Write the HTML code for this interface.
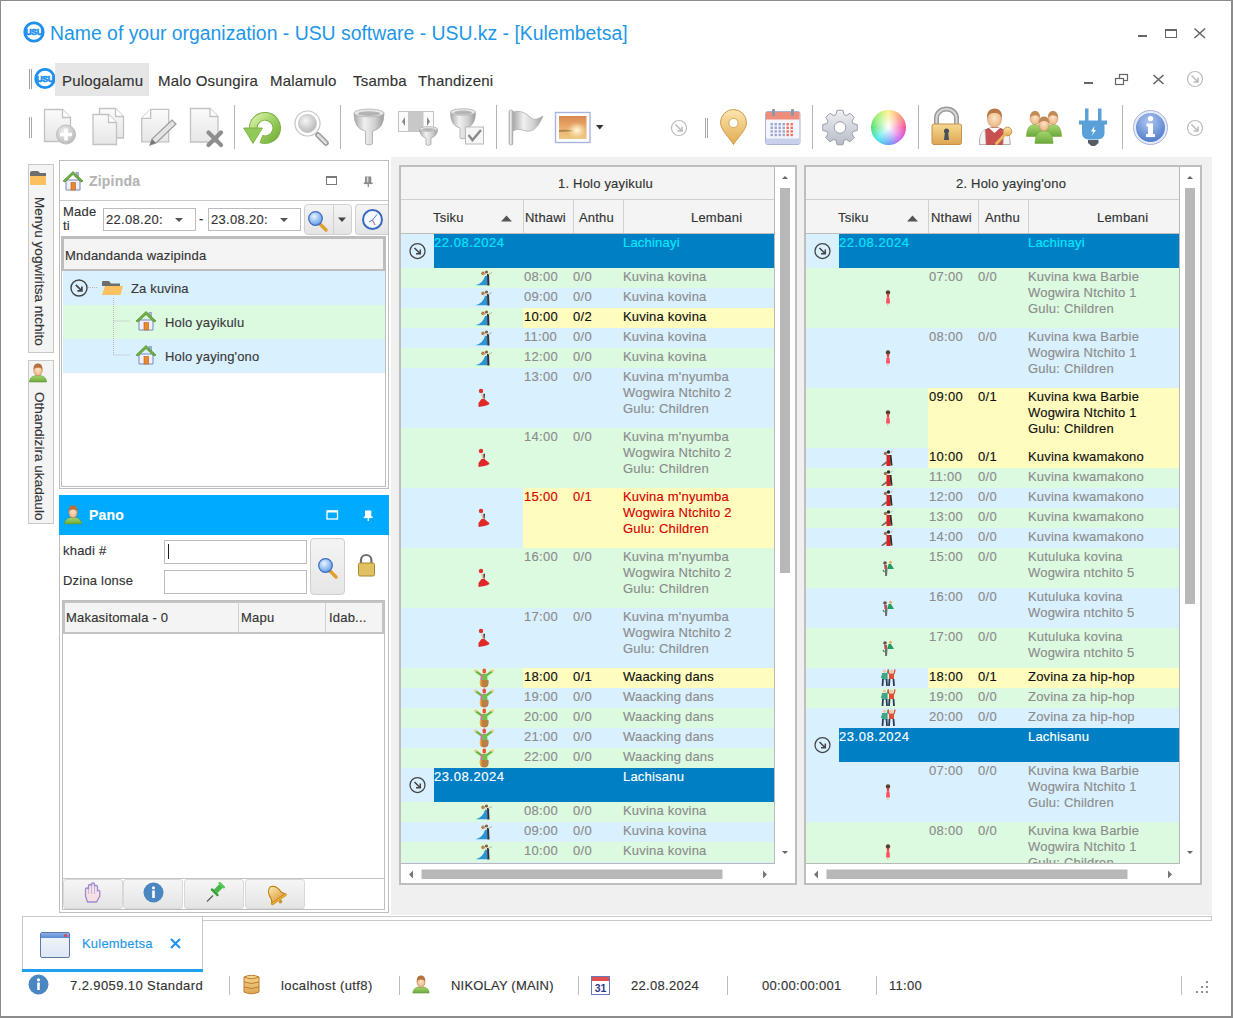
<!DOCTYPE html><html><head><meta charset="utf-8"><style>
*{margin:0;padding:0;box-sizing:border-box}
html,body{width:1233px;height:1018px;overflow:hidden;background:#fff;font-family:"Liberation Sans",sans-serif;color:#333}
.ab{position:absolute}
.t{position:absolute;white-space:nowrap;line-height:1;letter-spacing:0.2px;-webkit-text-stroke:0.15px currentColor}
svg{position:absolute;overflow:visible}
</style></head><body>
<div class="ab" style="left:0;top:0;width:1233px;height:1018px;border:1px solid #8c8c8c;border-right:2px solid #8c8c8c;border-bottom:2px solid #8c8c8c"></div>
<svg style="left:0;top:0;position:absolute" width="0" height="0">
<defs>
<linearGradient id="gPage" x1="0" y1="0" x2="0" y2="1"><stop offset="0" stop-color="#fbfbfb"/><stop offset="1" stop-color="#e6e6e6"/></linearGradient>
<radialGradient id="gPlus" cx="0.4" cy="0.35" r="0.7"><stop offset="0" stop-color="#eeeeee"/><stop offset="1" stop-color="#b8b8b8"/></radialGradient>
<linearGradient id="gGreen" x1="0" y1="0" x2="1" y2="1"><stop offset="0" stop-color="#d8f0a8"/><stop offset="0.5" stop-color="#9cd060"/><stop offset="1" stop-color="#78b040"/></linearGradient>
<radialGradient id="gLens" cx="0.4" cy="0.35" r="0.7"><stop offset="0" stop-color="#f6f6f6"/><stop offset="1" stop-color="#b4b4b4"/></radialGradient>
<linearGradient id="gSilver" x1="0" y1="0" x2="1" y2="0"><stop offset="0" stop-color="#a8a8a8"/><stop offset="0.35" stop-color="#f0f0f0"/><stop offset="0.7" stop-color="#d0d0d0"/><stop offset="1" stop-color="#9a9a9a"/></linearGradient>
<linearGradient id="gGold" x1="0" y1="0" x2="0" y2="1"><stop offset="0" stop-color="#fae6b0"/><stop offset="1" stop-color="#e2aa50"/></linearGradient>
<linearGradient id="gGold2" x1="0" y1="0" x2="0" y2="1"><stop offset="0" stop-color="#f6d890"/><stop offset="1" stop-color="#dca654"/></linearGradient>
<linearGradient id="gPhoto" x1="0" y1="0" x2="0" y2="1"><stop offset="0" stop-color="#d98850"/><stop offset="0.55" stop-color="#eab070"/><stop offset="1" stop-color="#f0c880"/></linearGradient>
<radialGradient id="gSun" cx="0.65" cy="0.62" r="0.35"><stop offset="0" stop-color="#fffbe0"/><stop offset="1" stop-color="#fff0c0" stop-opacity="0"/></radialGradient>
<linearGradient id="gGear" x1="0" y1="0" x2="0" y2="1"><stop offset="0" stop-color="#eef0f4"/><stop offset="1" stop-color="#b8bcc8"/></linearGradient>
<radialGradient id="gInfo" cx="0.45" cy="0.3" r="0.75"><stop offset="0" stop-color="#b0c8f0"/><stop offset="1" stop-color="#4a78c8"/></radialGradient>
<radialGradient id="gWhite" cx="0.5" cy="0.5" r="0.5"><stop offset="0" stop-color="#fff"/><stop offset="0.7" stop-color="#fff" stop-opacity="0"/></radialGradient>
<linearGradient id="gBtn" x1="0" y1="0" x2="0" y2="1"><stop offset="0" stop-color="#f8f8f8"/><stop offset="1" stop-color="#e2e2e2"/></linearGradient>
<radialGradient id="gBlueLens" cx="0.4" cy="0.35" r="0.7"><stop offset="0" stop-color="#e8f4ff"/><stop offset="1" stop-color="#5a9ae6"/></radialGradient>
<linearGradient id="gUserBody" x1="0" y1="0" x2="0" y2="1"><stop offset="0" stop-color="#a8d870"/><stop offset="1" stop-color="#6aa83a"/></linearGradient>
<radialGradient id="gFace" cx="0.5" cy="0.45" r="0.6"><stop offset="0" stop-color="#fde4c4"/><stop offset="1" stop-color="#e8b080"/></radialGradient>
</defs>
</svg>
<svg style="left:0;top:0" width="1" height="1"><circle cx="34" cy="32" r="9.2" fill="none" stroke="#1e90ee" stroke-width="2.8000000000000003"/><text x="34" y="35" font-family="Liberation Sans" font-weight="bold" font-size="8.6" fill="#1e90ee" stroke="#1e90ee" stroke-width="0.6" text-anchor="middle" letter-spacing="-0.4" transform="translate(34 32) scale(1 1.15) translate(-34 -32)">USU</text></svg>
<div class="t" style="left:50px;top:24px;font-size:19.4px;color:#1e97e6;font-weight:normal;-webkit-text-stroke:0;letter-spacing:0">Name of your organization - USU software - USU.kz - [Kulembetsa]</div>
<div class="ab" style="left:1138px;top:35px;width:9px;height:2px;background:#666"></div>
<div class="ab" style="left:1165px;top:29px;width:12px;height:9px;border:1px solid #666;border-top:2px solid #666"></div>
<svg style="left:0;top:0" width="1" height="1"><path d="M1194.5 28.5 L1205 38 M1205 28.5 L1194.5 38" stroke="#666" stroke-width="1.6"/></svg>
<div class="ab" style="left:29px;top:69px;width:1px;height:20px;background:#a0a0a0"></div>
<div class="ab" style="left:31px;top:69px;width:1px;height:20px;background:#a0a0a0"></div>
<svg style="left:0;top:0" width="1" height="1"><circle cx="45" cy="78.5" r="9.2" fill="none" stroke="#1e90ee" stroke-width="2.8000000000000003"/><text x="45" y="81.5" font-family="Liberation Sans" font-weight="bold" font-size="8.6" fill="#1e90ee" stroke="#1e90ee" stroke-width="0.6" text-anchor="middle" letter-spacing="-0.4" transform="translate(45 78.5) scale(1 1.15) translate(-45 -78.5)">USU</text></svg>
<div class="ab" style="left:55px;top:63px;width:94px;height:33px;background:#e6e6e6"></div>
<div class="t" style="left:62px;top:73px;font-size:15px;color:#333;font-weight:normal;">Pulogalamu</div>
<div class="t" style="left:158px;top:73px;font-size:15px;color:#333;font-weight:normal;">Malo Osungira</div>
<div class="t" style="left:270px;top:73px;font-size:15px;color:#333;font-weight:normal;">Malamulo</div>
<div class="t" style="left:353px;top:73px;font-size:15px;color:#333;font-weight:normal;">Tsamba</div>
<div class="t" style="left:418px;top:73px;font-size:15px;color:#333;font-weight:normal;">Thandizeni</div>
<div class="ab" style="left:1084px;top:82px;width:9px;height:2px;background:#666"></div>
<svg style="left:0;top:0" width="1" height="1"><rect x="1119.5" y="74.5" width="8" height="6" fill="none" stroke="#666" stroke-width="1.2"/><rect x="1115.5" y="78.5" width="8" height="6" fill="#fff" stroke="#666" stroke-width="1.2"/><path d="M1153.5 75 L1163.5 84 M1163.5 75 L1153.5 84" stroke="#666" stroke-width="1.6"/></svg>
<svg style="left:0;top:0" width="1" height="1"><circle cx="1195" cy="79" r="7.5" fill="none" stroke="#bbb" stroke-width="1.2"/><path d="M1191.5 75.5 L1198 82 M1198 77.5 L1198 82 L1193.5 82" fill="none" stroke="#bbb" stroke-width="1.5"/></svg>
<div class="ab" style="left:29px;top:117px;width:1px;height:21px;background:#a8a8a8"></div>
<div class="ab" style="left:31px;top:117px;width:1px;height:21px;background:#a8a8a8"></div>
<div class="ab" style="left:234px;top:105px;width:1px;height:44px;background:#b4b4b4"></div>
<div class="ab" style="left:340px;top:105px;width:1px;height:44px;background:#b4b4b4"></div>
<div class="ab" style="left:496px;top:105px;width:1px;height:44px;background:#b4b4b4"></div>
<div class="ab" style="left:812px;top:105px;width:1px;height:44px;background:#b4b4b4"></div>
<div class="ab" style="left:918px;top:105px;width:1px;height:44px;background:#b4b4b4"></div>
<div class="ab" style="left:1122px;top:105px;width:1px;height:44px;background:#b4b4b4"></div>
<div class="ab" style="left:705px;top:118px;width:1px;height:20px;background:#a8a8a8"></div>
<div class="ab" style="left:707px;top:118px;width:1px;height:20px;background:#a8a8a8"></div>
<svg style="left:0;top:0" width="1" height="1"><circle cx="679" cy="128" r="7.5" fill="none" stroke="#bbb" stroke-width="1.2"/><path d="M675.5 124.5 L682 131 M682 126.5 L682 131 L677.5 131" fill="none" stroke="#bbb" stroke-width="1.5"/></svg>
<svg style="left:0;top:0" width="1" height="1"><circle cx="1195" cy="128" r="7.5" fill="none" stroke="#bbb" stroke-width="1.2"/><path d="M1191.5 124.5 L1198 131 M1198 126.5 L1198 131 L1193.5 131" fill="none" stroke="#bbb" stroke-width="1.5"/></svg>
<div class="ab" style="left:871px;top:110px;width:35px;height:35px;border-radius:50%;background:conic-gradient(from 0deg,#fff08a,#ff9a7a,#f04a9a,#d060f0,#60a0f8,#40e8e8,#50e070,#a0f070,#fff08a)"></div>
<div class="ab" style="left:871px;top:110px;width:35px;height:35px;border-radius:50%;background:radial-gradient(circle,#fff 0%,rgba(255,255,255,0) 70%)"></div>
<svg style="left:0;top:0" width="1" height="1"><path d="M44.5 109.5 L62.5 109.5 L70.5 117.5 L70.5 141.5 L44.5 141.5 Z" fill="url(#gPage)" stroke="#c2c2c2" stroke-width="1.3"/><path d="M62.5 109.5 L62.5 117.5 L70.5 117.5" fill="#fff" stroke="#c2c2c2" stroke-width="1.3"/><circle cx="66" cy="134.5" r="9.5" fill="url(#gPlus)" stroke="#bdbdbd" stroke-width="1"/><path d="M66 128.5 V140.5 M60 134.5 H72" stroke="#fff" stroke-width="3.6"/><path d="M99.5 108.5 L115.5 108.5 L123.5 116.5 L123.5 138.0 L99.5 138.0 Z" fill="url(#gPage)" stroke="#c2c2c2" stroke-width="1.3"/><path d="M115.5 108.5 L115.5 116.5 L123.5 116.5" fill="#fff" stroke="#c2c2c2" stroke-width="1.3"/><path d="M93 114.5 L108.5 114.5 L116.5 122.5 L116.5 144.5 L93 144.5 Z" fill="url(#gPage)" stroke="#c2c2c2" stroke-width="1.3"/><path d="M108.5 114.5 L108.5 122.5 L116.5 122.5" fill="#fff" stroke="#c2c2c2" stroke-width="1.3"/><path d="M150.7 109.3 L168.7 109.3 L168.7 141.8 L141.7 141.8 L141.7 118.3 Z" fill="url(#gPage)" stroke="#c2c2c2" stroke-width="1.3"/><path d="M150.7 109.3 L150.7 118.3 L141.7 118.3" fill="#fff" stroke="#c2c2c2" stroke-width="1.3"/><path d="M150 145 L152 139 L172 120 L176 124 L156 143 Z" fill="#e4e4e4" stroke="#9a9a9a" stroke-width="1.2"/><path d="M150 145 L152 139 L156 143 Z" fill="#777"/><path d="M190.5 108.5 L210.0 108.5 L218.0 116.5 L218.0 142.0 L190.5 142.0 Z" fill="url(#gPage)" stroke="#c2c2c2" stroke-width="1.3"/><path d="M210.0 108.5 L210.0 116.5 L218.0 116.5" fill="#fff" stroke="#c2c2c2" stroke-width="1.3"/><path d="M208.5 132.5 L221 145 M221 132.5 L208.5 145" stroke="#8e8e8e" stroke-width="4.2" stroke-linecap="round"/><path d="M253.3 128 A11.7 11.7 0 1 1 261 139" fill="none" stroke="#78b040" stroke-width="8.6"/><path d="M253.3 128 A11.7 11.7 0 1 1 261 139" fill="none" stroke="url(#gGreen)" stroke-width="6.8"/><path d="M243.7 128 L262.4 128 L253 143.4 Z" fill="#92ca5a" stroke="#78b040" stroke-width="0.9"/><path d="M318 135 L326 143" stroke="#9a9a9a" stroke-width="5.5" stroke-linecap="round"/><path d="M318 135 L326 143" stroke="#e0e0e0" stroke-width="2.5" stroke-linecap="round"/><circle cx="307.5" cy="123.5" r="12.5" fill="#fff" stroke="#c4c4c4" stroke-width="1.2"/><circle cx="307.5" cy="123.5" r="9" fill="url(#gLens)" stroke="#c8c8c8" stroke-width="1"/><path d="M354.0 113 Q354.0 129 365.5 131 L365.5 144 Q369 146 372.5 144 L372.5 131 Q384.0 129 384.0 113 Z" fill="url(#gSilver)" stroke="#a8a8a8" stroke-width="0.8"/><ellipse cx="369" cy="113" rx="15.0" ry="3.9000000000000004" fill="#e8e8e8" stroke="#b0b0b0" stroke-width="0.8"/><ellipse cx="369" cy="113.6" rx="11.25" ry="2.4" fill="#b4b4b4"/><rect x="398.5" y="111.5" width="35" height="20" fill="#fafafa" stroke="#c4c4c4" stroke-width="1"/><rect x="408" y="112" width="15.5" height="19" fill="#c8c8c8"/><path d="M405 117 L402 121.5 L405 126 Z M427 117 L430 121.5 L427 126 Z" fill="#888"/><path d="M419.5 129 Q419.5 136 426.0 138 L426.0 144.5 Q428.5 146.5 431.0 144.5 L431.0 138 Q437.5 136 437.5 129 Z" fill="url(#gSilver)" stroke="#a8a8a8" stroke-width="0.8"/><ellipse cx="428.5" cy="129" rx="9.0" ry="2.34" fill="#e8e8e8" stroke="#b0b0b0" stroke-width="0.8"/><ellipse cx="428.5" cy="129.6" rx="6.75" ry="1.44" fill="#b4b4b4"/><path d="M450.5 112 Q450.5 126 460.0 128 L460.0 138 Q463 140 466.0 138 L466.0 128 Q475.5 126 475.5 112 Z" fill="url(#gSilver)" stroke="#a8a8a8" stroke-width="0.8"/><ellipse cx="463" cy="112" rx="12.5" ry="3.25" fill="#e8e8e8" stroke="#b0b0b0" stroke-width="0.8"/><ellipse cx="463" cy="112.6" rx="9.375" ry="2.0" fill="#b4b4b4"/><rect x="465.5" y="127" width="18" height="17" fill="#f6f6f6" stroke="#bcbcbc" stroke-width="1"/><path d="M468.5 135 L472.5 140 L481 130" fill="none" stroke="#8a8a8a" stroke-width="2.4"/><rect x="509" y="110" width="3.8" height="35" rx="1.5" fill="url(#gSilver)" stroke="#a0a0a0" stroke-width="0.6"/><path d="M513 112 C520 110 526 113 530 117 C534 121 538 119 543 116 C540 123 536 130 530 131 C524 132 520 127 513 131 Z" fill="url(#gSilver)" stroke="#b0b0b0" stroke-width="0.8"/><rect x="555.5" y="112.5" width="34.5" height="30" fill="#fff" stroke="#a8b4dc" stroke-width="1.4"/><rect x="559" y="116" width="27.5" height="23" fill="url(#gPhoto)"/><rect x="559" y="116" width="27.5" height="23" fill="url(#gSun)"/><path d="M559 130 Q566 129 574 131 L559 132 Z" fill="#8a6040" opacity="0.6"/><path d="M596 125 L603.5 125 L599.75 129.5 Z" fill="#333"/><path d="M733.5 144.5 C729 137 720.5 130 720.5 122.5 A13 13 0 0 1 746.5 122.5 C746.5 130 738 137 733.5 144.5 Z" fill="url(#gGold)" stroke="#cf9d48" stroke-width="1"/><circle cx="733.5" cy="123" r="4.6" fill="#fff" stroke="#d8a850" stroke-width="1"/><rect x="765.5" y="111.5" width="34.5" height="33" rx="2" fill="#f4f6fc" stroke="#a8b4d8" stroke-width="1"/><rect x="766" y="112" width="33.5" height="7.5" fill="#f08c7c"/><rect x="766" y="138.5" width="33.5" height="5.5" fill="#c8d0ec"/><rect x="772" y="109" width="3" height="7" rx="1" fill="#8a98a8"/><rect x="791" y="109" width="3" height="7" rx="1" fill="#8a98a8"/><rect x="770.5" y="123.0" width="2.4" height="2.4" fill="#9aa6d0"/><rect x="774.5" y="123.0" width="2.4" height="2.4" fill="#9aa6d0"/><rect x="778.5" y="123.0" width="2.4" height="2.4" fill="#9aa6d0"/><rect x="782.5" y="123.0" width="2.4" height="2.4" fill="#9aa6d0"/><rect x="786.5" y="123.0" width="2.4" height="2.4" fill="#f07060"/><rect x="790.5" y="123.0" width="2.4" height="2.4" fill="#f07060"/><rect x="770.5" y="126.6" width="2.4" height="2.4" fill="#9aa6d0"/><rect x="774.5" y="126.6" width="2.4" height="2.4" fill="#9aa6d0"/><rect x="778.5" y="126.6" width="2.4" height="2.4" fill="#9aa6d0"/><rect x="782.5" y="126.6" width="2.4" height="2.4" fill="#9aa6d0"/><rect x="786.5" y="126.6" width="2.4" height="2.4" fill="#f07060"/><rect x="790.5" y="126.6" width="2.4" height="2.4" fill="#f07060"/><rect x="770.5" y="130.2" width="2.4" height="2.4" fill="#9aa6d0"/><rect x="774.5" y="130.2" width="2.4" height="2.4" fill="#9aa6d0"/><rect x="778.5" y="130.2" width="2.4" height="2.4" fill="#9aa6d0"/><rect x="782.5" y="130.2" width="2.4" height="2.4" fill="#9aa6d0"/><rect x="786.5" y="130.2" width="2.4" height="2.4" fill="#f07060"/><rect x="790.5" y="130.2" width="2.4" height="2.4" fill="#f07060"/><rect x="770.5" y="133.8" width="2.4" height="2.4" fill="#9aa6d0"/><rect x="774.5" y="133.8" width="2.4" height="2.4" fill="#9aa6d0"/><rect x="778.5" y="133.8" width="2.4" height="2.4" fill="#9aa6d0"/><rect x="782.5" y="133.8" width="2.4" height="2.4" fill="#9aa6d0"/><rect x="786.5" y="133.8" width="2.4" height="2.4" fill="#f07060"/><rect x="790.5" y="133.8" width="2.4" height="2.4" fill="#f07060"/><path d="M852.90 123.51 L857.25 124.54 L857.25 130.46 L852.90 131.49 L851.94 133.80 L854.29 137.60 L850.10 141.79 L846.30 139.44 L843.99 140.40 L842.96 144.75 L837.04 144.75 L836.01 140.40 L833.70 139.44 L829.90 141.79 L825.71 137.60 L828.06 133.80 L827.10 131.49 L822.75 130.46 L822.75 124.54 L827.10 123.51 L828.06 121.20 L825.71 117.40 L829.90 113.21 L833.70 115.56 L836.01 114.60 L837.04 110.25 L842.96 110.25 L843.99 114.60 L846.30 115.56 L850.10 113.21 L854.29 117.40 L851.94 121.20 Z M845.8 127.5 A5.8 5.8 0 1 0 834.2 127.5 A5.8 5.8 0 1 0 845.8 127.5 Z" fill="url(#gGear)" fill-rule="evenodd" stroke="#9aa0aa" stroke-width="1"/><path d="M936.5 124 V118 A10 9 0 0 1 956.5 118 V124" fill="none" stroke="#9a9a9a" stroke-width="5"/><path d="M936.5 124 V118 A10 9 0 0 1 956.5 118 V124" fill="none" stroke="#d8d8d8" stroke-width="2"/><rect x="932" y="124" width="29.5" height="20.5" rx="2" fill="url(#gGold2)" stroke="#c89048" stroke-width="1"/><path d="M946.5 128.5 a2.6 2.6 0 0 1 2.6 2.6 c0 1 -0.5 1.6 -0.9 2 L949 140 H944 L944.8 133.1 c-0.4 -0.4 -0.9 -1 -0.9 -2 a2.6 2.6 0 0 1 2.6 -2.6 Z" fill="#4a5058"/><path d="M979.5 144.5 C979.5 133 984 128 994.5 127.5 C1005 128 1010 133 1010 144.5 Z" fill="#c85050" stroke="#a04040" stroke-width="0.8"/><path d="M979.5 144.5 C979.5 136 981 131 985 129.5 L986 144.5 Z M1010 144.5 C1010 136 1008.5 131 1004 129.5 L1003 144.5 Z" fill="#f4f4f4" stroke="#b0b0b0" stroke-width="0.6"/><path d="M989 128 L994.5 133 L1000 128 Z" fill="#fff"/><ellipse cx="994.5" cy="119" rx="7" ry="8.5" fill="url(#gFace)" stroke="#c89060" stroke-width="0.6"/><path d="M987.2 119 C986 112 990 108.5 994.5 108.5 C999.5 108.5 1003 112 1001.8 119 C1001 114 998 113 994.5 113 C991 113 988 114 987.2 119 Z" fill="#b87848"/><circle cx="1007.5" cy="131.5" r="4.3" fill="url(#gGold)" stroke="#c89048" stroke-width="1"/><path d="M1005 134.5 L996.5 143.5" stroke="#e8b860" stroke-width="3" stroke-linecap="round"/><path d="M1026.5 136.5 C1026.5 128.0 1029.9 124.6 1035 124.6 C1040.1 124.6 1043.5 128.0 1043.5 136.5 Z" fill="url(#gUserBody)" stroke="#7aa848" stroke-width="0.6"/><ellipse cx="1035" cy="118.225" rx="4.93" ry="6.375" fill="url(#gFace)" stroke="#c89060" stroke-width="0.6"/><path d="M1030.07 117.8 C1029.9 111.85 1033.3 111 1035 111 C1036.7 111 1040.1 111.85 1039.93 117.8 C1038.4 114.4 1031.6 114.4 1030.07 117.8 Z" fill="#c08a58"/><path d="M1044.5 136.5 C1044.5 128.0 1047.9 124.6 1053 124.6 C1058.1 124.6 1061.5 128.0 1061.5 136.5 Z" fill="url(#gUserBody)" stroke="#7aa848" stroke-width="0.6"/><ellipse cx="1053" cy="118.225" rx="4.93" ry="6.375" fill="url(#gFace)" stroke="#c89060" stroke-width="0.6"/><path d="M1048.07 117.8 C1047.9 111.85 1051.3 111 1053 111 C1054.7 111 1058.1 111.85 1057.93 117.8 C1056.4 114.4 1049.6 114.4 1048.07 117.8 Z" fill="#c08a58"/><path d="M1035.0 143.5 C1035.0 134.5 1038.6 130.9 1044 130.9 C1049.4 130.9 1053.0 134.5 1053.0 143.5 Z" fill="url(#gUserBody)" stroke="#7aa848" stroke-width="0.6"/><ellipse cx="1044" cy="124.15" rx="5.22" ry="6.75" fill="url(#gFace)" stroke="#c89060" stroke-width="0.6"/><path d="M1038.78 123.7 C1038.6 117.4 1042.2 116.5 1044 116.5 C1045.8 116.5 1049.4 117.4 1049.22 123.7 C1047.6 120.1 1040.4 120.1 1038.78 123.7 Z" fill="#c08a58"/><rect x="1085" y="108.5" width="3.5" height="13" fill="#5aa0d8"/><rect x="1098" y="108.5" width="3.5" height="13" fill="#5aa0d8"/><path d="M1079 120.5 H1107 V124.5 H1104.5 V133 C1104.5 137.5 1101 139.5 1097 139.5 H1089.5 C1085.5 139.5 1082 137.5 1082 133 V124.5 H1079 Z" fill="#5aa0d8"/><path d="M1094.5 126 L1091 131.5 L1093.5 131.5 L1091.5 136 L1096 130 L1093.8 130 Z" fill="#fff"/><path d="M1088 140 H1098.5 V143 L1095 146 H1091.5 L1088 143 Z" fill="#555c66"/><circle cx="1150.5" cy="127.5" r="17" fill="#e8ecf8" stroke="#a8b4d8" stroke-width="1"/><circle cx="1150.5" cy="127.5" r="14.5" fill="url(#gInfo)"/><circle cx="1150.5" cy="118.5" r="2.6" fill="#fff"/><path d="M1146.5 123.5 H1153 V134 H1155 V137 H1146 V134 H1148 V126.5 H1146.5 Z" fill="#fff"/></svg>
<div class="ab" style="left:391px;top:157px;width:821px;height:758px;background:#f0f0f0"></div>
<div class="ab" style="left:22px;top:916px;width:1190px;height:5px;background:#fff;border:1px solid #c8c8c8;border-radius:0"></div>
<div class="ab" style="left:28px;top:164px;width:26px;height:189px;background:#f4f4f4;border:1px solid #c8c8c8"></div>
<div class="ab" style="left:28px;top:360px;width:26px;height:164px;background:#f4f4f4;border:1px solid #c8c8c8"></div>
<div class="t" style="left:0px;top:0px;font-size:13.6px;color:#333;font-weight:normal;letter-spacing:0;transform-origin:0 0;transform:translate(46px,197px) rotate(90deg)">Menyu yogwiritsa ntchito</div>
<div class="t" style="left:0px;top:0px;font-size:13.6px;color:#333;font-weight:normal;letter-spacing:0;transform-origin:0 0;transform:translate(46px,392px) rotate(90deg)">Othandizira ukadaulo</div>
<div class="ab" style="left:59px;top:160px;width:330px;height:329px;background:#fff;border:1px solid #bdbdbd"></div>
<div class="ab" style="left:60px;top:200px;width:328px;height:1px;background:#c8c8c8"></div>
<div class="t" style="left:89px;top:174px;font-size:14px;color:#b4b4b4;font-weight:bold;">Zipinda</div>
<div class="ab" style="left:326px;top:176px;width:11px;height:9px;border:1.4px solid #7a7a7a;border-top:2.4px solid #7a7a7a"></div>
<div class="t" style="left:63px;top:205px;font-size:13px;color:#333;font-weight:normal;">Made</div>
<div class="t" style="left:63px;top:219px;font-size:13px;color:#333;font-weight:normal;">ti</div>
<div class="ab" style="left:103px;top:208px;width:93px;height:23px;background:#fff;border:1px solid #bcbcbc"></div>
<div class="t" style="left:106px;top:213px;font-size:13px;color:#333;font-weight:normal;letter-spacing:0.3px">22.08.20:</div>
<div class="ab" style="left:208px;top:208px;width:93px;height:23px;background:#fff;border:1px solid #bcbcbc"></div>
<div class="t" style="left:211px;top:213px;font-size:13px;color:#333;font-weight:normal;letter-spacing:0.3px">23.08.20:</div>
<div class="t" style="left:199px;top:212px;font-size:13px;color:#333;font-weight:normal;">-</div>
<div class="ab" style="left:304px;top:204px;width:48px;height:31px;background:linear-gradient(#f4f4f4,#e4e4e4);border:1px solid #d0d0d0;border-radius:4px"></div>
<div class="ab" style="left:333px;top:205px;width:1px;height:29px;background:#d0d0d0"></div>
<div class="ab" style="left:355px;top:204px;width:33px;height:31px;background:linear-gradient(#f4f4f4,#e4e4e4);border:1px solid #d0d0d0;border-right:none;border-radius:4px 0 0 4px"></div>
<div class="ab" style="left:61px;top:236px;width:325px;height:251px;background:#fff;border:1px solid #bdbdbd"></div>
<div class="ab" style="left:62px;top:237px;width:323px;height:34px;background:#f4f4f4;border:2px solid #bdbdbd"></div>
<div class="t" style="left:65px;top:249px;font-size:13px;color:#333;font-weight:normal;">Mndandanda wazipinda</div>
<div class="ab" style="left:63px;top:271px;width:322px;height:34px;background:#d9f0ff"></div>
<div class="ab" style="left:63px;top:305px;width:322px;height:34px;background:#dcfae0"></div>
<div class="ab" style="left:63px;top:339px;width:322px;height:34px;background:#d9f0ff"></div>
<div class="t" style="left:131px;top:282px;font-size:13px;color:#3a3a3a;font-weight:normal;letter-spacing:0.15px">Za kuvina</div>
<div class="t" style="left:165px;top:316px;font-size:13px;color:#3a3a3a;font-weight:normal;letter-spacing:0.15px">Holo yayikulu</div>
<div class="t" style="left:165px;top:350px;font-size:13px;color:#3a3a3a;font-weight:normal;letter-spacing:0.15px">Holo yaying'ono</div>
<div class="ab" style="left:59px;top:495px;width:330px;height:418px;background:#fff;border:1px solid #bdbdbd"></div>
<div class="ab" style="left:59px;top:495px;width:330px;height:40px;background:#00aaff"></div>
<div class="t" style="left:89px;top:508px;font-size:14px;color:#fff;font-weight:bold;">Pano</div>
<div class="t" style="left:63px;top:544px;font-size:13px;color:#333;font-weight:normal;">khadi #</div>
<div class="t" style="left:63px;top:574px;font-size:13px;color:#333;font-weight:normal;">Dzina lonse</div>
<div class="ab" style="left:164px;top:540px;width:143px;height:24px;background:#fff;border:1px solid #bcbcbc"></div>
<div class="ab" style="left:168px;top:544px;width:1px;height:15px;background:#222"></div>
<div class="ab" style="left:164px;top:570px;width:143px;height:24px;background:#fff;border:1px solid #bcbcbc"></div>
<div class="ab" style="left:310px;top:538px;width:35px;height:57px;background:linear-gradient(#f4f4f4,#e6e6e6);border:1px solid #d0d0d0;border-radius:4px"></div>
<div class="ab" style="left:62px;top:600px;width:323px;height:310px;background:#fff;border:1px solid #bdbdbd"></div>
<div class="ab" style="left:63px;top:601px;width:321px;height:33px;background:#f4f4f4;border:2px solid #c4c4c4;border-bottom:2px solid #c4c4c4"></div>
<div class="ab" style="left:238px;top:602px;width:1px;height:31px;background:#d0d0d0"></div>
<div class="ab" style="left:325px;top:602px;width:1px;height:31px;background:#d0d0d0"></div>
<div class="t" style="left:66px;top:611px;font-size:13px;color:#333;font-weight:normal;">Makasitomala - 0</div>
<div class="t" style="left:241px;top:611px;font-size:13px;color:#333;font-weight:normal;">Mapu</div>
<div class="t" style="left:329px;top:611px;font-size:13px;color:#333;font-weight:normal;">Idab...</div>
<div class="ab" style="left:63px;top:878px;width:321px;height:1px;background:#c4c4c4"></div>
<div class="ab" style="left:63px;top:879px;width:60px;height:30px;background:linear-gradient(#f6f6f6,#e4e4e4);border:1px solid #d8d8d8;border-radius:3px"></div>
<div class="ab" style="left:123px;top:879px;width:60px;height:30px;background:linear-gradient(#f6f6f6,#e4e4e4);border:1px solid #d8d8d8;border-radius:3px"></div>
<div class="ab" style="left:184px;top:879px;width:60px;height:30px;background:linear-gradient(#f6f6f6,#e4e4e4);border:1px solid #d8d8d8;border-radius:3px"></div>
<div class="ab" style="left:245px;top:879px;width:60px;height:30px;background:linear-gradient(#f6f6f6,#e4e4e4);border:1px solid #d8d8d8;border-radius:3px"></div>
<div class="ab" style="left:399px;top:165px;width:398px;height:720px;background:#fff;border:2px solid #bebebe"></div>
<div class="ab" style="left:401px;top:167px;width:373px;height:32px;background:#f4f4f4"></div>
<div class="ab" style="left:401px;top:199px;width:373px;height:1px;background:#cfcfcf"></div>
<div class="t" style="left:558px;top:177px;font-size:13px;color:#333;font-weight:normal;">1. Holo yayikulu</div>
<div class="ab" style="left:401px;top:200px;width:373px;height:33px;background:#f4f4f4"></div>
<div class="ab" style="left:401px;top:233px;width:373px;height:1px;background:#bdbdbd"></div>
<div class="ab" style="left:523px;top:200px;width:1px;height:33px;background:#d0d0d0"></div>
<div class="ab" style="left:573px;top:200px;width:1px;height:33px;background:#d0d0d0"></div>
<div class="ab" style="left:623px;top:200px;width:1px;height:33px;background:#d0d0d0"></div>
<div class="ab" style="left:774px;top:167px;width:1px;height:696px;background:#b9b9b9"></div>
<div class="ab" style="left:401px;top:863px;width:374px;height:1px;background:#b9b9b9"></div>
<div class="t" style="left:433px;top:211px;font-size:13px;color:#333;font-weight:normal;">Tsiku</div>
<svg style="left:0;top:0" width="1" height="1"><path d="M501 221.5 L512 221.5 L506.5 215.5 Z" fill="#555"/></svg>
<div class="t" style="left:525px;top:211px;font-size:13px;color:#333;font-weight:normal;">Nthawi</div>
<div class="t" style="left:579px;top:211px;font-size:13px;color:#333;font-weight:normal;">Anthu</div>
<div class="t" style="left:691px;top:211px;font-size:13px;color:#333;font-weight:normal;">Lembani</div>
<div class="ab" style="left:401px;top:234px;width:373px;height:629px;overflow:hidden">
<div class="ab" style="left:0;top:0px;width:373px;height:34px;background:#d9f0ff"></div>
<div class="ab" style="left:33px;top:0px;width:340px;height:34px;background:#007fc4"></div>
<div class="t" style="left:33px;top:2px;font-size:13px;color:#00e8ff;letter-spacing:0.55px">22.08.2024</div>
<div class="t" style="left:222px;top:2px;font-size:13px;color:#00e8ff">Lachinayi</div>
<svg style="left:0;top:0" width="1" height="1"><circle cx="16.5" cy="17" r="7.5" fill="none" stroke="#444" stroke-width="1.25"/><path d="M13.5 14 L19.0 19.5 M19.3 15.5 L19.3 19.8 L15.0 19.8" fill="none" stroke="#444" stroke-width="1.5"/></svg>
<div class="ab" style="left:0;top:34px;width:373px;height:20px;background:#dcfae0"></div>
<div class="t" style="left:123px;top:36px;font-size:13px;color:#8c8c8c;letter-spacing:0.3px">08:00</div>
<div class="t" style="left:172px;top:36px;font-size:13px;color:#8c8c8c;letter-spacing:0.3px">0/0</div>
<div class="t" style="left:222px;top:36px;font-size:13px;color:#8c8c8c;letter-spacing:0.2px">Kuvina kovina</div>
<svg style="left:0;top:0" width="1" height="1"><path d="M74.5 51.2 Q82 49.5 84 42.0 L86.5 41.5 L87 51.2 Z" fill="#2a94d6"/><path d="M86 40.0 L88 40.0 L88.5 51.5 L86.5 51.5 Z" fill="#3a3030"/><path d="M87 40.5 L91 38.5" stroke="#b8a898" stroke-width="0.9"/><circle cx="82" cy="39.4" r="1.8" fill="#b08050"/><circle cx="85.5" cy="38.0" r="1.6" fill="#806040"/><path d="M82.5 41.0 L85 40.0" stroke="#e8c8a8" stroke-width="1.2"/></svg>
<div class="ab" style="left:0;top:54px;width:373px;height:20px;background:#d9f0ff"></div>
<div class="t" style="left:123px;top:56px;font-size:13px;color:#8c8c8c;letter-spacing:0.3px">09:00</div>
<div class="t" style="left:172px;top:56px;font-size:13px;color:#8c8c8c;letter-spacing:0.3px">0/0</div>
<div class="t" style="left:222px;top:56px;font-size:13px;color:#8c8c8c;letter-spacing:0.2px">Kuvina kovina</div>
<svg style="left:0;top:0" width="1" height="1"><path d="M74.5 71.2 Q82 69.5 84 62.0 L86.5 61.5 L87 71.2 Z" fill="#2a94d6"/><path d="M86 60.0 L88 60.0 L88.5 71.5 L86.5 71.5 Z" fill="#3a3030"/><path d="M87 60.5 L91 58.5" stroke="#b8a898" stroke-width="0.9"/><circle cx="82" cy="59.4" r="1.8" fill="#b08050"/><circle cx="85.5" cy="58.0" r="1.6" fill="#806040"/><path d="M82.5 61.0 L85 60.0" stroke="#e8c8a8" stroke-width="1.2"/></svg>
<div class="ab" style="left:0;top:74px;width:373px;height:20px;background:#dcfae0"></div>
<div class="ab" style="left:122px;top:74px;width:251px;height:20px;background:#fffcbd"></div>
<div class="t" style="left:123px;top:76px;font-size:13px;color:#111;letter-spacing:0.3px">10:00</div>
<div class="t" style="left:172px;top:76px;font-size:13px;color:#111;letter-spacing:0.3px">0/2</div>
<div class="t" style="left:222px;top:76px;font-size:13px;color:#111;letter-spacing:0.2px">Kuvina kovina</div>
<svg style="left:0;top:0" width="1" height="1"><path d="M74.5 91.2 Q82 89.5 84 82.0 L86.5 81.5 L87 91.2 Z" fill="#2a94d6"/><path d="M86 80.0 L88 80.0 L88.5 91.5 L86.5 91.5 Z" fill="#3a3030"/><path d="M87 80.5 L91 78.5" stroke="#b8a898" stroke-width="0.9"/><circle cx="82" cy="79.4" r="1.8" fill="#b08050"/><circle cx="85.5" cy="78.0" r="1.6" fill="#806040"/><path d="M82.5 81.0 L85 80.0" stroke="#e8c8a8" stroke-width="1.2"/></svg>
<div class="ab" style="left:0;top:94px;width:373px;height:20px;background:#d9f0ff"></div>
<div class="t" style="left:123px;top:96px;font-size:13px;color:#8c8c8c;letter-spacing:0.3px">11:00</div>
<div class="t" style="left:172px;top:96px;font-size:13px;color:#8c8c8c;letter-spacing:0.3px">0/0</div>
<div class="t" style="left:222px;top:96px;font-size:13px;color:#8c8c8c;letter-spacing:0.2px">Kuvina kovina</div>
<svg style="left:0;top:0" width="1" height="1"><path d="M74.5 111.2 Q82 109.5 84 102.0 L86.5 101.5 L87 111.2 Z" fill="#2a94d6"/><path d="M86 100.0 L88 100.0 L88.5 111.5 L86.5 111.5 Z" fill="#3a3030"/><path d="M87 100.5 L91 98.5" stroke="#b8a898" stroke-width="0.9"/><circle cx="82" cy="99.4" r="1.8" fill="#b08050"/><circle cx="85.5" cy="98.0" r="1.6" fill="#806040"/><path d="M82.5 101.0 L85 100.0" stroke="#e8c8a8" stroke-width="1.2"/></svg>
<div class="ab" style="left:0;top:114px;width:373px;height:20px;background:#dcfae0"></div>
<div class="t" style="left:123px;top:116px;font-size:13px;color:#8c8c8c;letter-spacing:0.3px">12:00</div>
<div class="t" style="left:172px;top:116px;font-size:13px;color:#8c8c8c;letter-spacing:0.3px">0/0</div>
<div class="t" style="left:222px;top:116px;font-size:13px;color:#8c8c8c;letter-spacing:0.2px">Kuvina kovina</div>
<svg style="left:0;top:0" width="1" height="1"><path d="M74.5 131.2 Q82 129.5 84 122.0 L86.5 121.5 L87 131.2 Z" fill="#2a94d6"/><path d="M86 120.0 L88 120.0 L88.5 131.5 L86.5 131.5 Z" fill="#3a3030"/><path d="M87 120.5 L91 118.5" stroke="#b8a898" stroke-width="0.9"/><circle cx="82" cy="119.4" r="1.8" fill="#b08050"/><circle cx="85.5" cy="118.0" r="1.6" fill="#806040"/><path d="M82.5 121.0 L85 120.0" stroke="#e8c8a8" stroke-width="1.2"/></svg>
<div class="ab" style="left:0;top:134px;width:373px;height:60px;background:#d9f0ff"></div>
<div class="t" style="left:123px;top:136px;font-size:13px;color:#8c8c8c;letter-spacing:0.3px">13:00</div>
<div class="t" style="left:172px;top:136px;font-size:13px;color:#8c8c8c;letter-spacing:0.3px">0/0</div>
<div class="t" style="left:222px;top:136px;font-size:13px;color:#8c8c8c;letter-spacing:0.2px">Kuvina m'nyumba</div>
<div class="t" style="left:222px;top:152px;font-size:13px;color:#8c8c8c;letter-spacing:0.2px">Wogwira Ntchito 2</div>
<div class="t" style="left:222px;top:168px;font-size:13px;color:#8c8c8c;letter-spacing:0.2px">Gulu: Children</div>
<svg style="left:0;top:0" width="1" height="1"><circle cx="80.0" cy="157.0" r="2.2" fill="#e03030"/><path d="M80.0 160.0 L82.5 160.0 L83.0 166.0 L81.5 166.0 Z" fill="#f0c0a0"/><path d="M82.5 159.5 L84.0 160.0 L83.5 165.0 L82.5 164.0 Z" fill="#303030"/><path d="M80.5 165.0 L83.5 165.0 C85.5 167.0 88.5 168.5 88.5 170.0 C85.5 172.0 81.5 172.0 77.5 173.0 L77.5 169.0 Z" fill="#e02828"/></svg>
<div class="ab" style="left:0;top:194px;width:373px;height:60px;background:#dcfae0"></div>
<div class="t" style="left:123px;top:196px;font-size:13px;color:#8c8c8c;letter-spacing:0.3px">14:00</div>
<div class="t" style="left:172px;top:196px;font-size:13px;color:#8c8c8c;letter-spacing:0.3px">0/0</div>
<div class="t" style="left:222px;top:196px;font-size:13px;color:#8c8c8c;letter-spacing:0.2px">Kuvina m'nyumba</div>
<div class="t" style="left:222px;top:212px;font-size:13px;color:#8c8c8c;letter-spacing:0.2px">Wogwira Ntchito 2</div>
<div class="t" style="left:222px;top:228px;font-size:13px;color:#8c8c8c;letter-spacing:0.2px">Gulu: Children</div>
<svg style="left:0;top:0" width="1" height="1"><circle cx="80.0" cy="217.0" r="2.2" fill="#e03030"/><path d="M80.0 220.0 L82.5 220.0 L83.0 226.0 L81.5 226.0 Z" fill="#f0c0a0"/><path d="M82.5 219.5 L84.0 220.0 L83.5 225.0 L82.5 224.0 Z" fill="#303030"/><path d="M80.5 225.0 L83.5 225.0 C85.5 227.0 88.5 228.5 88.5 230.0 C85.5 232.0 81.5 232.0 77.5 233.0 L77.5 229.0 Z" fill="#e02828"/></svg>
<div class="ab" style="left:0;top:254px;width:373px;height:60px;background:#d9f0ff"></div>
<div class="ab" style="left:122px;top:254px;width:251px;height:60px;background:#fffcbd"></div>
<div class="t" style="left:123px;top:256px;font-size:13px;color:#d40000;letter-spacing:0.3px">15:00</div>
<div class="t" style="left:172px;top:256px;font-size:13px;color:#d40000;letter-spacing:0.3px">0/1</div>
<div class="t" style="left:222px;top:256px;font-size:13px;color:#d40000;letter-spacing:0.2px">Kuvina m'nyumba</div>
<div class="t" style="left:222px;top:272px;font-size:13px;color:#d40000;letter-spacing:0.2px">Wogwira Ntchito 2</div>
<div class="t" style="left:222px;top:288px;font-size:13px;color:#d40000;letter-spacing:0.2px">Gulu: Children</div>
<svg style="left:0;top:0" width="1" height="1"><circle cx="80.0" cy="277.0" r="2.2" fill="#e03030"/><path d="M80.0 280.0 L82.5 280.0 L83.0 286.0 L81.5 286.0 Z" fill="#f0c0a0"/><path d="M82.5 279.5 L84.0 280.0 L83.5 285.0 L82.5 284.0 Z" fill="#303030"/><path d="M80.5 285.0 L83.5 285.0 C85.5 287.0 88.5 288.5 88.5 290.0 C85.5 292.0 81.5 292.0 77.5 293.0 L77.5 289.0 Z" fill="#e02828"/></svg>
<div class="ab" style="left:0;top:314px;width:373px;height:60px;background:#dcfae0"></div>
<div class="t" style="left:123px;top:316px;font-size:13px;color:#8c8c8c;letter-spacing:0.3px">16:00</div>
<div class="t" style="left:172px;top:316px;font-size:13px;color:#8c8c8c;letter-spacing:0.3px">0/0</div>
<div class="t" style="left:222px;top:316px;font-size:13px;color:#8c8c8c;letter-spacing:0.2px">Kuvina m'nyumba</div>
<div class="t" style="left:222px;top:332px;font-size:13px;color:#8c8c8c;letter-spacing:0.2px">Wogwira Ntchito 2</div>
<div class="t" style="left:222px;top:348px;font-size:13px;color:#8c8c8c;letter-spacing:0.2px">Gulu: Children</div>
<svg style="left:0;top:0" width="1" height="1"><circle cx="80.0" cy="337.0" r="2.2" fill="#e03030"/><path d="M80.0 340.0 L82.5 340.0 L83.0 346.0 L81.5 346.0 Z" fill="#f0c0a0"/><path d="M82.5 339.5 L84.0 340.0 L83.5 345.0 L82.5 344.0 Z" fill="#303030"/><path d="M80.5 345.0 L83.5 345.0 C85.5 347.0 88.5 348.5 88.5 350.0 C85.5 352.0 81.5 352.0 77.5 353.0 L77.5 349.0 Z" fill="#e02828"/></svg>
<div class="ab" style="left:0;top:374px;width:373px;height:60px;background:#d9f0ff"></div>
<div class="t" style="left:123px;top:376px;font-size:13px;color:#8c8c8c;letter-spacing:0.3px">17:00</div>
<div class="t" style="left:172px;top:376px;font-size:13px;color:#8c8c8c;letter-spacing:0.3px">0/0</div>
<div class="t" style="left:222px;top:376px;font-size:13px;color:#8c8c8c;letter-spacing:0.2px">Kuvina m'nyumba</div>
<div class="t" style="left:222px;top:392px;font-size:13px;color:#8c8c8c;letter-spacing:0.2px">Wogwira Ntchito 2</div>
<div class="t" style="left:222px;top:408px;font-size:13px;color:#8c8c8c;letter-spacing:0.2px">Gulu: Children</div>
<svg style="left:0;top:0" width="1" height="1"><circle cx="80.0" cy="397.0" r="2.2" fill="#e03030"/><path d="M80.0 400.0 L82.5 400.0 L83.0 406.0 L81.5 406.0 Z" fill="#f0c0a0"/><path d="M82.5 399.5 L84.0 400.0 L83.5 405.0 L82.5 404.0 Z" fill="#303030"/><path d="M80.5 405.0 L83.5 405.0 C85.5 407.0 88.5 408.5 88.5 410.0 C85.5 412.0 81.5 412.0 77.5 413.0 L77.5 409.0 Z" fill="#e02828"/></svg>
<div class="ab" style="left:0;top:434px;width:373px;height:20px;background:#dcfae0"></div>
<div class="ab" style="left:122px;top:434px;width:251px;height:20px;background:#fffcbd"></div>
<div class="t" style="left:123px;top:436px;font-size:13px;color:#111;letter-spacing:0.3px">18:00</div>
<div class="t" style="left:172px;top:436px;font-size:13px;color:#111;letter-spacing:0.3px">0/1</div>
<div class="t" style="left:222px;top:436px;font-size:13px;color:#111;letter-spacing:0.2px">Waacking dans</div>
<svg style="left:0;top:0" width="1" height="1"><path d="M74.5 437.0 L80 441.0 M91.5 437.0 L86 441.0" stroke="#70b840" stroke-width="2.2" stroke-linecap="round"/><circle cx="74.5" cy="436.8" r="1.4" fill="#f0d090"/><circle cx="91.5" cy="436.8" r="1.4" fill="#f0d090"/><rect x="81.5" y="434.5" width="3.5" height="5" rx="1.5" fill="#f05040"/><path d="M80 440.0 L86 440.0 L86.5 446.0 L79.5 446.0 Z" fill="#70c050"/><path d="M80 440.0 L81.5 440.0 L81 446.0 L79.5 446.0 Z" fill="#f060b0"/><path d="M79 446.0 L87.5 446.0 Q88.5 453.5 83.5 453.5 Q78 453.5 79 446.0 Z" fill="#b88048"/><path d="M79 446.0 L80.5 446.0 L80.5 453.0 Q78 451.0 79 446.0 Z" fill="#f0a830"/></svg>
<div class="ab" style="left:0;top:454px;width:373px;height:20px;background:#d9f0ff"></div>
<div class="t" style="left:123px;top:456px;font-size:13px;color:#8c8c8c;letter-spacing:0.3px">19:00</div>
<div class="t" style="left:172px;top:456px;font-size:13px;color:#8c8c8c;letter-spacing:0.3px">0/0</div>
<div class="t" style="left:222px;top:456px;font-size:13px;color:#8c8c8c;letter-spacing:0.2px">Waacking dans</div>
<svg style="left:0;top:0" width="1" height="1"><path d="M74.5 457.0 L80 461.0 M91.5 457.0 L86 461.0" stroke="#70b840" stroke-width="2.2" stroke-linecap="round"/><circle cx="74.5" cy="456.8" r="1.4" fill="#f0d090"/><circle cx="91.5" cy="456.8" r="1.4" fill="#f0d090"/><rect x="81.5" y="454.5" width="3.5" height="5" rx="1.5" fill="#f05040"/><path d="M80 460.0 L86 460.0 L86.5 466.0 L79.5 466.0 Z" fill="#70c050"/><path d="M80 460.0 L81.5 460.0 L81 466.0 L79.5 466.0 Z" fill="#f060b0"/><path d="M79 466.0 L87.5 466.0 Q88.5 473.5 83.5 473.5 Q78 473.5 79 466.0 Z" fill="#b88048"/><path d="M79 466.0 L80.5 466.0 L80.5 473.0 Q78 471.0 79 466.0 Z" fill="#f0a830"/></svg>
<div class="ab" style="left:0;top:474px;width:373px;height:20px;background:#dcfae0"></div>
<div class="t" style="left:123px;top:476px;font-size:13px;color:#8c8c8c;letter-spacing:0.3px">20:00</div>
<div class="t" style="left:172px;top:476px;font-size:13px;color:#8c8c8c;letter-spacing:0.3px">0/0</div>
<div class="t" style="left:222px;top:476px;font-size:13px;color:#8c8c8c;letter-spacing:0.2px">Waacking dans</div>
<svg style="left:0;top:0" width="1" height="1"><path d="M74.5 477.0 L80 481.0 M91.5 477.0 L86 481.0" stroke="#70b840" stroke-width="2.2" stroke-linecap="round"/><circle cx="74.5" cy="476.8" r="1.4" fill="#f0d090"/><circle cx="91.5" cy="476.8" r="1.4" fill="#f0d090"/><rect x="81.5" y="474.5" width="3.5" height="5" rx="1.5" fill="#f05040"/><path d="M80 480.0 L86 480.0 L86.5 486.0 L79.5 486.0 Z" fill="#70c050"/><path d="M80 480.0 L81.5 480.0 L81 486.0 L79.5 486.0 Z" fill="#f060b0"/><path d="M79 486.0 L87.5 486.0 Q88.5 493.5 83.5 493.5 Q78 493.5 79 486.0 Z" fill="#b88048"/><path d="M79 486.0 L80.5 486.0 L80.5 493.0 Q78 491.0 79 486.0 Z" fill="#f0a830"/></svg>
<div class="ab" style="left:0;top:494px;width:373px;height:20px;background:#d9f0ff"></div>
<div class="t" style="left:123px;top:496px;font-size:13px;color:#8c8c8c;letter-spacing:0.3px">21:00</div>
<div class="t" style="left:172px;top:496px;font-size:13px;color:#8c8c8c;letter-spacing:0.3px">0/0</div>
<div class="t" style="left:222px;top:496px;font-size:13px;color:#8c8c8c;letter-spacing:0.2px">Waacking dans</div>
<svg style="left:0;top:0" width="1" height="1"><path d="M74.5 497.0 L80 501.0 M91.5 497.0 L86 501.0" stroke="#70b840" stroke-width="2.2" stroke-linecap="round"/><circle cx="74.5" cy="496.8" r="1.4" fill="#f0d090"/><circle cx="91.5" cy="496.8" r="1.4" fill="#f0d090"/><rect x="81.5" y="494.5" width="3.5" height="5" rx="1.5" fill="#f05040"/><path d="M80 500.0 L86 500.0 L86.5 506.0 L79.5 506.0 Z" fill="#70c050"/><path d="M80 500.0 L81.5 500.0 L81 506.0 L79.5 506.0 Z" fill="#f060b0"/><path d="M79 506.0 L87.5 506.0 Q88.5 513.5 83.5 513.5 Q78 513.5 79 506.0 Z" fill="#b88048"/><path d="M79 506.0 L80.5 506.0 L80.5 513.0 Q78 511.0 79 506.0 Z" fill="#f0a830"/></svg>
<div class="ab" style="left:0;top:514px;width:373px;height:20px;background:#dcfae0"></div>
<div class="t" style="left:123px;top:516px;font-size:13px;color:#8c8c8c;letter-spacing:0.3px">22:00</div>
<div class="t" style="left:172px;top:516px;font-size:13px;color:#8c8c8c;letter-spacing:0.3px">0/0</div>
<div class="t" style="left:222px;top:516px;font-size:13px;color:#8c8c8c;letter-spacing:0.2px">Waacking dans</div>
<svg style="left:0;top:0" width="1" height="1"><path d="M74.5 517.0 L80 521.0 M91.5 517.0 L86 521.0" stroke="#70b840" stroke-width="2.2" stroke-linecap="round"/><circle cx="74.5" cy="516.8" r="1.4" fill="#f0d090"/><circle cx="91.5" cy="516.8" r="1.4" fill="#f0d090"/><rect x="81.5" y="514.5" width="3.5" height="5" rx="1.5" fill="#f05040"/><path d="M80 520.0 L86 520.0 L86.5 526.0 L79.5 526.0 Z" fill="#70c050"/><path d="M80 520.0 L81.5 520.0 L81 526.0 L79.5 526.0 Z" fill="#f060b0"/><path d="M79 526.0 L87.5 526.0 Q88.5 533.5 83.5 533.5 Q78 533.5 79 526.0 Z" fill="#b88048"/><path d="M79 526.0 L80.5 526.0 L80.5 533.0 Q78 531.0 79 526.0 Z" fill="#f0a830"/></svg>
<div class="ab" style="left:0;top:534px;width:373px;height:34px;background:#d9f0ff"></div>
<div class="ab" style="left:33px;top:534px;width:340px;height:34px;background:#007fc4"></div>
<div class="t" style="left:33px;top:536px;font-size:13px;color:#fff;letter-spacing:0.55px">23.08.2024</div>
<div class="t" style="left:222px;top:536px;font-size:13px;color:#fff">Lachisanu</div>
<svg style="left:0;top:0" width="1" height="1"><circle cx="16.5" cy="551" r="7.5" fill="none" stroke="#444" stroke-width="1.25"/><path d="M13.5 548 L19.0 553.5 M19.3 549.5 L19.3 553.8 L15.0 553.8" fill="none" stroke="#444" stroke-width="1.5"/></svg>
<div class="ab" style="left:0;top:568px;width:373px;height:20px;background:#dcfae0"></div>
<div class="t" style="left:123px;top:570px;font-size:13px;color:#8c8c8c;letter-spacing:0.3px">08:00</div>
<div class="t" style="left:172px;top:570px;font-size:13px;color:#8c8c8c;letter-spacing:0.3px">0/0</div>
<div class="t" style="left:222px;top:570px;font-size:13px;color:#8c8c8c;letter-spacing:0.2px">Kuvina kovina</div>
<svg style="left:0;top:0" width="1" height="1"><path d="M74.5 585.2 Q82 583.5 84 576.0 L86.5 575.5 L87 585.2 Z" fill="#2a94d6"/><path d="M86 574.0 L88 574.0 L88.5 585.5 L86.5 585.5 Z" fill="#3a3030"/><path d="M87 574.5 L91 572.5" stroke="#b8a898" stroke-width="0.9"/><circle cx="82" cy="573.4" r="1.8" fill="#b08050"/><circle cx="85.5" cy="572.0" r="1.6" fill="#806040"/><path d="M82.5 575.0 L85 574.0" stroke="#e8c8a8" stroke-width="1.2"/></svg>
<div class="ab" style="left:0;top:588px;width:373px;height:20px;background:#d9f0ff"></div>
<div class="t" style="left:123px;top:590px;font-size:13px;color:#8c8c8c;letter-spacing:0.3px">09:00</div>
<div class="t" style="left:172px;top:590px;font-size:13px;color:#8c8c8c;letter-spacing:0.3px">0/0</div>
<div class="t" style="left:222px;top:590px;font-size:13px;color:#8c8c8c;letter-spacing:0.2px">Kuvina kovina</div>
<svg style="left:0;top:0" width="1" height="1"><path d="M74.5 605.2 Q82 603.5 84 596.0 L86.5 595.5 L87 605.2 Z" fill="#2a94d6"/><path d="M86 594.0 L88 594.0 L88.5 605.5 L86.5 605.5 Z" fill="#3a3030"/><path d="M87 594.5 L91 592.5" stroke="#b8a898" stroke-width="0.9"/><circle cx="82" cy="593.4" r="1.8" fill="#b08050"/><circle cx="85.5" cy="592.0" r="1.6" fill="#806040"/><path d="M82.5 595.0 L85 594.0" stroke="#e8c8a8" stroke-width="1.2"/></svg>
<div class="ab" style="left:0;top:608px;width:373px;height:20px;background:#dcfae0"></div>
<div class="t" style="left:123px;top:610px;font-size:13px;color:#8c8c8c;letter-spacing:0.3px">10:00</div>
<div class="t" style="left:172px;top:610px;font-size:13px;color:#8c8c8c;letter-spacing:0.3px">0/0</div>
<div class="t" style="left:222px;top:610px;font-size:13px;color:#8c8c8c;letter-spacing:0.2px">Kuvina kovina</div>
<svg style="left:0;top:0" width="1" height="1"><path d="M74.5 625.2 Q82 623.5 84 616.0 L86.5 615.5 L87 625.2 Z" fill="#2a94d6"/><path d="M86 614.0 L88 614.0 L88.5 625.5 L86.5 625.5 Z" fill="#3a3030"/><path d="M87 614.5 L91 612.5" stroke="#b8a898" stroke-width="0.9"/><circle cx="82" cy="613.4" r="1.8" fill="#b08050"/><circle cx="85.5" cy="612.0" r="1.6" fill="#806040"/><path d="M82.5 615.0 L85 614.0" stroke="#e8c8a8" stroke-width="1.2"/></svg>
<div class="ab" style="left:0;top:628px;width:373px;height:20px;background:#d9f0ff"></div>
<div class="t" style="left:123px;top:630px;font-size:13px;color:#8c8c8c;letter-spacing:0.3px">11:00</div>
<div class="t" style="left:172px;top:630px;font-size:13px;color:#8c8c8c;letter-spacing:0.3px">0/0</div>
<div class="t" style="left:222px;top:630px;font-size:13px;color:#8c8c8c;letter-spacing:0.2px">Kuvina kovina</div>
<svg style="left:0;top:0" width="1" height="1"><path d="M74.5 645.2 Q82 643.5 84 636.0 L86.5 635.5 L87 645.2 Z" fill="#2a94d6"/><path d="M86 634.0 L88 634.0 L88.5 645.5 L86.5 645.5 Z" fill="#3a3030"/><path d="M87 634.5 L91 632.5" stroke="#b8a898" stroke-width="0.9"/><circle cx="82" cy="633.4" r="1.8" fill="#b08050"/><circle cx="85.5" cy="632.0" r="1.6" fill="#806040"/><path d="M82.5 635.0 L85 634.0" stroke="#e8c8a8" stroke-width="1.2"/></svg>
</div>
<svg style="left:0;top:0" width="1" height="1"><path d="M782 179 L788 179 L785 176 Z" fill="#666"/><path d="M782 851 L788 851 L785 854 Z" fill="#666"/><path d="M409 874.5 L413 870.5 L413 878.5 Z" fill="#777"/><path d="M763 870.5 L767 874.5 L763 878.5 Z" fill="#777"/></svg>
<div class="ab" style="left:804px;top:165px;width:398px;height:720px;background:#fff;border:2px solid #bebebe"></div>
<div class="ab" style="left:806px;top:167px;width:373px;height:32px;background:#f4f4f4"></div>
<div class="ab" style="left:806px;top:199px;width:373px;height:1px;background:#cfcfcf"></div>
<div class="t" style="left:956px;top:177px;font-size:13px;color:#333;font-weight:normal;">2. Holo yaying'ono</div>
<div class="ab" style="left:806px;top:200px;width:373px;height:33px;background:#f4f4f4"></div>
<div class="ab" style="left:806px;top:233px;width:373px;height:1px;background:#bdbdbd"></div>
<div class="ab" style="left:928px;top:200px;width:1px;height:33px;background:#d0d0d0"></div>
<div class="ab" style="left:978px;top:200px;width:1px;height:33px;background:#d0d0d0"></div>
<div class="ab" style="left:1028px;top:200px;width:1px;height:33px;background:#d0d0d0"></div>
<div class="ab" style="left:1179px;top:167px;width:1px;height:696px;background:#b9b9b9"></div>
<div class="ab" style="left:806px;top:863px;width:374px;height:1px;background:#b9b9b9"></div>
<div class="t" style="left:838px;top:211px;font-size:13px;color:#333;font-weight:normal;">Tsiku</div>
<svg style="left:0;top:0" width="1" height="1"><path d="M907 221.5 L918 221.5 L912.5 215.5 Z" fill="#555"/></svg>
<div class="t" style="left:931px;top:211px;font-size:13px;color:#333;font-weight:normal;">Nthawi</div>
<div class="t" style="left:985px;top:211px;font-size:13px;color:#333;font-weight:normal;">Anthu</div>
<div class="t" style="left:1097px;top:211px;font-size:13px;color:#333;font-weight:normal;">Lembani</div>
<div class="ab" style="left:806px;top:234px;width:373px;height:629px;overflow:hidden">
<div class="ab" style="left:0;top:0px;width:373px;height:34px;background:#d9f0ff"></div>
<div class="ab" style="left:33px;top:0px;width:340px;height:34px;background:#007fc4"></div>
<div class="t" style="left:33px;top:2px;font-size:13px;color:#00e8ff;letter-spacing:0.55px">22.08.2024</div>
<div class="t" style="left:222px;top:2px;font-size:13px;color:#00e8ff">Lachinayi</div>
<svg style="left:0;top:0" width="1" height="1"><circle cx="16.5" cy="17" r="7.5" fill="none" stroke="#444" stroke-width="1.25"/><path d="M13.5 14 L19.0 19.5 M19.3 15.5 L19.3 19.8 L15.0 19.8" fill="none" stroke="#444" stroke-width="1.5"/></svg>
<div class="ab" style="left:0;top:34px;width:373px;height:60px;background:#dcfae0"></div>
<div class="t" style="left:123px;top:36px;font-size:13px;color:#8c8c8c;letter-spacing:0.3px">07:00</div>
<div class="t" style="left:172px;top:36px;font-size:13px;color:#8c8c8c;letter-spacing:0.3px">0/0</div>
<div class="t" style="left:222px;top:36px;font-size:13px;color:#8c8c8c;letter-spacing:0.2px">Kuvina kwa Barbie</div>
<div class="t" style="left:222px;top:52px;font-size:13px;color:#8c8c8c;letter-spacing:0.2px">Wogwira Ntchito 1</div>
<div class="t" style="left:222px;top:68px;font-size:13px;color:#8c8c8c;letter-spacing:0.2px">Gulu: Children</div>
<svg style="left:0;top:0" width="1" height="1"><circle cx="82" cy="58.5" r="2.2" fill="#5a4030"/><path d="M80.8 60.0 L83.2 60.0 L83 63.5 L81 63.5 Z" fill="#e84040"/><path d="M80.5 63.5 L83.5 63.5 L84 69.5 L80 69.5 Z" fill="#ff5060"/><path d="M81.5 69.5 L82 72.0" stroke="#e0c0a0" stroke-width="1"/></svg>
<div class="ab" style="left:0;top:94px;width:373px;height:60px;background:#d9f0ff"></div>
<div class="t" style="left:123px;top:96px;font-size:13px;color:#8c8c8c;letter-spacing:0.3px">08:00</div>
<div class="t" style="left:172px;top:96px;font-size:13px;color:#8c8c8c;letter-spacing:0.3px">0/0</div>
<div class="t" style="left:222px;top:96px;font-size:13px;color:#8c8c8c;letter-spacing:0.2px">Kuvina kwa Barbie</div>
<div class="t" style="left:222px;top:112px;font-size:13px;color:#8c8c8c;letter-spacing:0.2px">Wogwira Ntchito 1</div>
<div class="t" style="left:222px;top:128px;font-size:13px;color:#8c8c8c;letter-spacing:0.2px">Gulu: Children</div>
<svg style="left:0;top:0" width="1" height="1"><circle cx="82" cy="118.5" r="2.2" fill="#5a4030"/><path d="M80.8 120.0 L83.2 120.0 L83 123.5 L81 123.5 Z" fill="#e84040"/><path d="M80.5 123.5 L83.5 123.5 L84 129.5 L80 129.5 Z" fill="#ff5060"/><path d="M81.5 129.5 L82 132.0" stroke="#e0c0a0" stroke-width="1"/></svg>
<div class="ab" style="left:0;top:154px;width:373px;height:60px;background:#dcfae0"></div>
<div class="ab" style="left:122px;top:154px;width:251px;height:60px;background:#fffcbd"></div>
<div class="t" style="left:123px;top:156px;font-size:13px;color:#111;letter-spacing:0.3px">09:00</div>
<div class="t" style="left:172px;top:156px;font-size:13px;color:#111;letter-spacing:0.3px">0/1</div>
<div class="t" style="left:222px;top:156px;font-size:13px;color:#111;letter-spacing:0.2px">Kuvina kwa Barbie</div>
<div class="t" style="left:222px;top:172px;font-size:13px;color:#111;letter-spacing:0.2px">Wogwira Ntchito 1</div>
<div class="t" style="left:222px;top:188px;font-size:13px;color:#111;letter-spacing:0.2px">Gulu: Children</div>
<svg style="left:0;top:0" width="1" height="1"><circle cx="82" cy="178.5" r="2.2" fill="#5a4030"/><path d="M80.8 180.0 L83.2 180.0 L83 183.5 L81 183.5 Z" fill="#e84040"/><path d="M80.5 183.5 L83.5 183.5 L84 189.5 L80 189.5 Z" fill="#ff5060"/><path d="M81.5 189.5 L82 192.0" stroke="#e0c0a0" stroke-width="1"/></svg>
<div class="ab" style="left:0;top:214px;width:373px;height:20px;background:#d9f0ff"></div>
<div class="ab" style="left:122px;top:214px;width:251px;height:20px;background:#fffcbd"></div>
<div class="t" style="left:123px;top:216px;font-size:13px;color:#111;letter-spacing:0.3px">10:00</div>
<div class="t" style="left:172px;top:216px;font-size:13px;color:#111;letter-spacing:0.3px">0/1</div>
<div class="t" style="left:222px;top:216px;font-size:13px;color:#111;letter-spacing:0.2px">Kuvina kwamakono</div>
<svg style="left:0;top:0" width="1" height="1"><circle cx="79.5" cy="219.5" r="1.8" fill="#a07050"/><circle cx="82.5" cy="218.0" r="1.7" fill="#303030"/><path d="M84.5 218.5 L86.5 217.0" stroke="#b0b0b0" stroke-width="1"/><path d="M83.0 221.0 L85.5 221.0 L86.5 231.5 L84.5 231.5 L84.0 226.0 Z" fill="#303030"/><path d="M80.5 221.0 L83.5 221.0 L84.5 232.0 L80.5 232.0 Z" fill="#e02020"/><path d="M80.5 227.0 L75.0 231.5 L76.5 232.0 L81.5 229.0 Z" fill="#806050"/></svg>
<div class="ab" style="left:0;top:234px;width:373px;height:20px;background:#dcfae0"></div>
<div class="t" style="left:123px;top:236px;font-size:13px;color:#8c8c8c;letter-spacing:0.3px">11:00</div>
<div class="t" style="left:172px;top:236px;font-size:13px;color:#8c8c8c;letter-spacing:0.3px">0/0</div>
<div class="t" style="left:222px;top:236px;font-size:13px;color:#8c8c8c;letter-spacing:0.2px">Kuvina kwamakono</div>
<svg style="left:0;top:0" width="1" height="1"><circle cx="79.5" cy="239.5" r="1.8" fill="#a07050"/><circle cx="82.5" cy="238.0" r="1.7" fill="#303030"/><path d="M84.5 238.5 L86.5 237.0" stroke="#b0b0b0" stroke-width="1"/><path d="M83.0 241.0 L85.5 241.0 L86.5 251.5 L84.5 251.5 L84.0 246.0 Z" fill="#303030"/><path d="M80.5 241.0 L83.5 241.0 L84.5 252.0 L80.5 252.0 Z" fill="#e02020"/><path d="M80.5 247.0 L75.0 251.5 L76.5 252.0 L81.5 249.0 Z" fill="#806050"/></svg>
<div class="ab" style="left:0;top:254px;width:373px;height:20px;background:#d9f0ff"></div>
<div class="t" style="left:123px;top:256px;font-size:13px;color:#8c8c8c;letter-spacing:0.3px">12:00</div>
<div class="t" style="left:172px;top:256px;font-size:13px;color:#8c8c8c;letter-spacing:0.3px">0/0</div>
<div class="t" style="left:222px;top:256px;font-size:13px;color:#8c8c8c;letter-spacing:0.2px">Kuvina kwamakono</div>
<svg style="left:0;top:0" width="1" height="1"><circle cx="79.5" cy="259.5" r="1.8" fill="#a07050"/><circle cx="82.5" cy="258.0" r="1.7" fill="#303030"/><path d="M84.5 258.5 L86.5 257.0" stroke="#b0b0b0" stroke-width="1"/><path d="M83.0 261.0 L85.5 261.0 L86.5 271.5 L84.5 271.5 L84.0 266.0 Z" fill="#303030"/><path d="M80.5 261.0 L83.5 261.0 L84.5 272.0 L80.5 272.0 Z" fill="#e02020"/><path d="M80.5 267.0 L75.0 271.5 L76.5 272.0 L81.5 269.0 Z" fill="#806050"/></svg>
<div class="ab" style="left:0;top:274px;width:373px;height:20px;background:#dcfae0"></div>
<div class="t" style="left:123px;top:276px;font-size:13px;color:#8c8c8c;letter-spacing:0.3px">13:00</div>
<div class="t" style="left:172px;top:276px;font-size:13px;color:#8c8c8c;letter-spacing:0.3px">0/0</div>
<div class="t" style="left:222px;top:276px;font-size:13px;color:#8c8c8c;letter-spacing:0.2px">Kuvina kwamakono</div>
<svg style="left:0;top:0" width="1" height="1"><circle cx="79.5" cy="279.5" r="1.8" fill="#a07050"/><circle cx="82.5" cy="278.0" r="1.7" fill="#303030"/><path d="M84.5 278.5 L86.5 277.0" stroke="#b0b0b0" stroke-width="1"/><path d="M83.0 281.0 L85.5 281.0 L86.5 291.5 L84.5 291.5 L84.0 286.0 Z" fill="#303030"/><path d="M80.5 281.0 L83.5 281.0 L84.5 292.0 L80.5 292.0 Z" fill="#e02020"/><path d="M80.5 287.0 L75.0 291.5 L76.5 292.0 L81.5 289.0 Z" fill="#806050"/></svg>
<div class="ab" style="left:0;top:294px;width:373px;height:20px;background:#d9f0ff"></div>
<div class="t" style="left:123px;top:296px;font-size:13px;color:#8c8c8c;letter-spacing:0.3px">14:00</div>
<div class="t" style="left:172px;top:296px;font-size:13px;color:#8c8c8c;letter-spacing:0.3px">0/0</div>
<div class="t" style="left:222px;top:296px;font-size:13px;color:#8c8c8c;letter-spacing:0.2px">Kuvina kwamakono</div>
<svg style="left:0;top:0" width="1" height="1"><circle cx="79.5" cy="299.5" r="1.8" fill="#a07050"/><circle cx="82.5" cy="298.0" r="1.7" fill="#303030"/><path d="M84.5 298.5 L86.5 297.0" stroke="#b0b0b0" stroke-width="1"/><path d="M83.0 301.0 L85.5 301.0 L86.5 311.5 L84.5 311.5 L84.0 306.0 Z" fill="#303030"/><path d="M80.5 301.0 L83.5 301.0 L84.5 312.0 L80.5 312.0 Z" fill="#e02020"/><path d="M80.5 307.0 L75.0 311.5 L76.5 312.0 L81.5 309.0 Z" fill="#806050"/></svg>
<div class="ab" style="left:0;top:314px;width:373px;height:40px;background:#dcfae0"></div>
<div class="t" style="left:123px;top:316px;font-size:13px;color:#8c8c8c;letter-spacing:0.3px">15:00</div>
<div class="t" style="left:172px;top:316px;font-size:13px;color:#8c8c8c;letter-spacing:0.3px">0/0</div>
<div class="t" style="left:222px;top:316px;font-size:13px;color:#8c8c8c;letter-spacing:0.2px">Kutuluka kovina</div>
<div class="t" style="left:222px;top:332px;font-size:13px;color:#8c8c8c;letter-spacing:0.2px">Wogwira ntchito 5</div>
<svg style="left:0;top:0" width="1" height="1"><circle cx="79.0" cy="329.0" r="1.8" fill="#6a5048"/><path d="M78.0 331.0 L81.0 331.0 L81.5 335.0 L78.5 335.0 Z" fill="#b05858"/><path d="M79.0 335.0 L81.5 335.0 L81.0 342.0 L79.0 342.0 Z" fill="#707070"/><circle cx="84.5" cy="328.3" r="1.5" fill="#e0b060"/><path d="M82.5 330.0 L85.0 330.0 L88.0 335.0 L81.5 335.0 Z" fill="#20a060"/><path d="M77.0 336.0 L78.5 338.0" stroke="#40a060" stroke-width="1.4"/></svg>
<div class="ab" style="left:0;top:354px;width:373px;height:40px;background:#d9f0ff"></div>
<div class="t" style="left:123px;top:356px;font-size:13px;color:#8c8c8c;letter-spacing:0.3px">16:00</div>
<div class="t" style="left:172px;top:356px;font-size:13px;color:#8c8c8c;letter-spacing:0.3px">0/0</div>
<div class="t" style="left:222px;top:356px;font-size:13px;color:#8c8c8c;letter-spacing:0.2px">Kutuluka kovina</div>
<div class="t" style="left:222px;top:372px;font-size:13px;color:#8c8c8c;letter-spacing:0.2px">Wogwira ntchito 5</div>
<svg style="left:0;top:0" width="1" height="1"><circle cx="79.0" cy="369.0" r="1.8" fill="#6a5048"/><path d="M78.0 371.0 L81.0 371.0 L81.5 375.0 L78.5 375.0 Z" fill="#b05858"/><path d="M79.0 375.0 L81.5 375.0 L81.0 382.0 L79.0 382.0 Z" fill="#707070"/><circle cx="84.5" cy="368.3" r="1.5" fill="#e0b060"/><path d="M82.5 370.0 L85.0 370.0 L88.0 375.0 L81.5 375.0 Z" fill="#20a060"/><path d="M77.0 376.0 L78.5 378.0" stroke="#40a060" stroke-width="1.4"/></svg>
<div class="ab" style="left:0;top:394px;width:373px;height:40px;background:#dcfae0"></div>
<div class="t" style="left:123px;top:396px;font-size:13px;color:#8c8c8c;letter-spacing:0.3px">17:00</div>
<div class="t" style="left:172px;top:396px;font-size:13px;color:#8c8c8c;letter-spacing:0.3px">0/0</div>
<div class="t" style="left:222px;top:396px;font-size:13px;color:#8c8c8c;letter-spacing:0.2px">Kutuluka kovina</div>
<div class="t" style="left:222px;top:412px;font-size:13px;color:#8c8c8c;letter-spacing:0.2px">Wogwira ntchito 5</div>
<svg style="left:0;top:0" width="1" height="1"><circle cx="79.0" cy="409.0" r="1.8" fill="#6a5048"/><path d="M78.0 411.0 L81.0 411.0 L81.5 415.0 L78.5 415.0 Z" fill="#b05858"/><path d="M79.0 415.0 L81.5 415.0 L81.0 422.0 L79.0 422.0 Z" fill="#707070"/><circle cx="84.5" cy="408.3" r="1.5" fill="#e0b060"/><path d="M82.5 410.0 L85.0 410.0 L88.0 415.0 L81.5 415.0 Z" fill="#20a060"/><path d="M77.0 416.0 L78.5 418.0" stroke="#40a060" stroke-width="1.4"/></svg>
<div class="ab" style="left:0;top:434px;width:373px;height:20px;background:#d9f0ff"></div>
<div class="ab" style="left:122px;top:434px;width:251px;height:20px;background:#fffcbd"></div>
<div class="t" style="left:123px;top:436px;font-size:13px;color:#111;letter-spacing:0.3px">18:00</div>
<div class="t" style="left:172px;top:436px;font-size:13px;color:#111;letter-spacing:0.3px">0/1</div>
<div class="t" style="left:222px;top:436px;font-size:13px;color:#111;letter-spacing:0.2px">Zovina za hip-hop</div>
<svg style="left:0;top:0" width="1" height="1"><circle cx="78.5" cy="437.2" r="1.7" fill="#f0c8a0"/><circle cx="85.5" cy="437.2" r="1.7" fill="#f0c8a0"/><path d="M76.5 439.5 L81 439.5 L81 445.0 L76.5 445.0 Z M81 440.0 L82.5 435.5" fill="#40a888" stroke="#40a888" stroke-width="1.2"/><path d="M75.5 444.0 L76.5 441.0" stroke="#40a888" stroke-width="1.4"/><path d="M83 439.5 L88 439.5 L88 445.0 L83 445.0 Z" fill="#e05030"/><path d="M83 440.0 L82 435.5 M88 440.0 L89 435.5" stroke="#e05030" stroke-width="1.3"/><path d="M77 445.0 L76.5 452.0 M80.5 445.0 L81 452.0 M83.5 445.0 L83 452.0 M87.5 445.0 L88 452.0" stroke="#2a3a58" stroke-width="1.8"/></svg>
<div class="ab" style="left:0;top:454px;width:373px;height:20px;background:#dcfae0"></div>
<div class="t" style="left:123px;top:456px;font-size:13px;color:#8c8c8c;letter-spacing:0.3px">19:00</div>
<div class="t" style="left:172px;top:456px;font-size:13px;color:#8c8c8c;letter-spacing:0.3px">0/0</div>
<div class="t" style="left:222px;top:456px;font-size:13px;color:#8c8c8c;letter-spacing:0.2px">Zovina za hip-hop</div>
<svg style="left:0;top:0" width="1" height="1"><circle cx="78.5" cy="457.2" r="1.7" fill="#f0c8a0"/><circle cx="85.5" cy="457.2" r="1.7" fill="#f0c8a0"/><path d="M76.5 459.5 L81 459.5 L81 465.0 L76.5 465.0 Z M81 460.0 L82.5 455.5" fill="#40a888" stroke="#40a888" stroke-width="1.2"/><path d="M75.5 464.0 L76.5 461.0" stroke="#40a888" stroke-width="1.4"/><path d="M83 459.5 L88 459.5 L88 465.0 L83 465.0 Z" fill="#e05030"/><path d="M83 460.0 L82 455.5 M88 460.0 L89 455.5" stroke="#e05030" stroke-width="1.3"/><path d="M77 465.0 L76.5 472.0 M80.5 465.0 L81 472.0 M83.5 465.0 L83 472.0 M87.5 465.0 L88 472.0" stroke="#2a3a58" stroke-width="1.8"/></svg>
<div class="ab" style="left:0;top:474px;width:373px;height:20px;background:#d9f0ff"></div>
<div class="t" style="left:123px;top:476px;font-size:13px;color:#8c8c8c;letter-spacing:0.3px">20:00</div>
<div class="t" style="left:172px;top:476px;font-size:13px;color:#8c8c8c;letter-spacing:0.3px">0/0</div>
<div class="t" style="left:222px;top:476px;font-size:13px;color:#8c8c8c;letter-spacing:0.2px">Zovina za hip-hop</div>
<svg style="left:0;top:0" width="1" height="1"><circle cx="78.5" cy="477.2" r="1.7" fill="#f0c8a0"/><circle cx="85.5" cy="477.2" r="1.7" fill="#f0c8a0"/><path d="M76.5 479.5 L81 479.5 L81 485.0 L76.5 485.0 Z M81 480.0 L82.5 475.5" fill="#40a888" stroke="#40a888" stroke-width="1.2"/><path d="M75.5 484.0 L76.5 481.0" stroke="#40a888" stroke-width="1.4"/><path d="M83 479.5 L88 479.5 L88 485.0 L83 485.0 Z" fill="#e05030"/><path d="M83 480.0 L82 475.5 M88 480.0 L89 475.5" stroke="#e05030" stroke-width="1.3"/><path d="M77 485.0 L76.5 492.0 M80.5 485.0 L81 492.0 M83.5 485.0 L83 492.0 M87.5 485.0 L88 492.0" stroke="#2a3a58" stroke-width="1.8"/></svg>
<div class="ab" style="left:0;top:494px;width:373px;height:34px;background:#d9f0ff"></div>
<div class="ab" style="left:33px;top:494px;width:340px;height:34px;background:#007fc4"></div>
<div class="t" style="left:33px;top:496px;font-size:13px;color:#fff;letter-spacing:0.55px">23.08.2024</div>
<div class="t" style="left:222px;top:496px;font-size:13px;color:#fff">Lachisanu</div>
<svg style="left:0;top:0" width="1" height="1"><circle cx="16.5" cy="511" r="7.5" fill="none" stroke="#444" stroke-width="1.25"/><path d="M13.5 508 L19.0 513.5 M19.3 509.5 L19.3 513.8 L15.0 513.8" fill="none" stroke="#444" stroke-width="1.5"/></svg>
<div class="ab" style="left:0;top:528px;width:373px;height:60px;background:#d9f0ff"></div>
<div class="t" style="left:123px;top:530px;font-size:13px;color:#8c8c8c;letter-spacing:0.3px">07:00</div>
<div class="t" style="left:172px;top:530px;font-size:13px;color:#8c8c8c;letter-spacing:0.3px">0/0</div>
<div class="t" style="left:222px;top:530px;font-size:13px;color:#8c8c8c;letter-spacing:0.2px">Kuvina kwa Barbie</div>
<div class="t" style="left:222px;top:546px;font-size:13px;color:#8c8c8c;letter-spacing:0.2px">Wogwira Ntchito 1</div>
<div class="t" style="left:222px;top:562px;font-size:13px;color:#8c8c8c;letter-spacing:0.2px">Gulu: Children</div>
<svg style="left:0;top:0" width="1" height="1"><circle cx="82" cy="552.5" r="2.2" fill="#5a4030"/><path d="M80.8 554.0 L83.2 554.0 L83 557.5 L81 557.5 Z" fill="#e84040"/><path d="M80.5 557.5 L83.5 557.5 L84 563.5 L80 563.5 Z" fill="#ff5060"/><path d="M81.5 563.5 L82 566.0" stroke="#e0c0a0" stroke-width="1"/></svg>
<div class="ab" style="left:0;top:588px;width:373px;height:60px;background:#dcfae0"></div>
<div class="t" style="left:123px;top:590px;font-size:13px;color:#8c8c8c;letter-spacing:0.3px">08:00</div>
<div class="t" style="left:172px;top:590px;font-size:13px;color:#8c8c8c;letter-spacing:0.3px">0/0</div>
<div class="t" style="left:222px;top:590px;font-size:13px;color:#8c8c8c;letter-spacing:0.2px">Kuvina kwa Barbie</div>
<div class="t" style="left:222px;top:606px;font-size:13px;color:#8c8c8c;letter-spacing:0.2px">Wogwira Ntchito 1</div>
<div class="t" style="left:222px;top:622px;font-size:13px;color:#8c8c8c;letter-spacing:0.2px">Gulu: Children</div>
<svg style="left:0;top:0" width="1" height="1"><circle cx="82" cy="612.5" r="2.2" fill="#5a4030"/><path d="M80.8 614.0 L83.2 614.0 L83 617.5 L81 617.5 Z" fill="#e84040"/><path d="M80.5 617.5 L83.5 617.5 L84 623.5 L80 623.5 Z" fill="#ff5060"/><path d="M81.5 623.5 L82 626.0" stroke="#e0c0a0" stroke-width="1"/></svg>
</div>
<svg style="left:0;top:0" width="1" height="1"><path d="M1187 179 L1193 179 L1190 176 Z" fill="#666"/><path d="M1187 851 L1193 851 L1190 854 Z" fill="#666"/><path d="M814 874.5 L818 870.5 L818 878.5 Z" fill="#777"/><path d="M1168 870.5 L1172 874.5 L1168 878.5 Z" fill="#777"/></svg>
<div class="ab" style="left:22px;top:916px;width:181px;height:55px;background:#fff;border:1px solid #c8c8c8;border-bottom:none"></div>
<div class="ab" style="left:22px;top:969px;width:181px;height:3px;background:#1ea0ee"></div>
<div class="t" style="left:82px;top:937px;font-size:13px;color:#1e97e6;font-weight:normal;">Kulembetsa</div>
<svg style="left:0;top:0" width="1" height="1"><path d="M171 939 L180 948 M180 939 L171 948" stroke="#1e90ee" stroke-width="2"/></svg>
<div class="ab" style="left:40px;top:932px;width:30px;height:26px;background:linear-gradient(#f2f6fc,#dde7f6);border:1px solid #5c78a8;border-radius:2px"></div>
<div class="ab" style="left:41px;top:933px;width:28px;height:5px;background:linear-gradient(#8ab0e8,#5c88d0)"></div>
<div class="ab" style="left:64px;top:934px;width:3px;height:3px;background:#e04040;border-radius:50%"></div>
<div class="ab" style="left:229px;top:976px;width:1px;height:19px;background:#bdbdbd"></div>
<div class="ab" style="left:399px;top:976px;width:1px;height:19px;background:#bdbdbd"></div>
<div class="ab" style="left:578px;top:976px;width:1px;height:19px;background:#bdbdbd"></div>
<div class="ab" style="left:727px;top:976px;width:1px;height:19px;background:#bdbdbd"></div>
<div class="ab" style="left:876px;top:976px;width:1px;height:19px;background:#bdbdbd"></div>
<div class="ab" style="left:1181px;top:976px;width:1px;height:19px;background:#bdbdbd"></div>
<div class="t" style="left:70px;top:979px;font-size:13px;color:#333;font-weight:normal;letter-spacing:0.4px">7.2.9059.10 Standard</div>
<div class="t" style="left:281px;top:979px;font-size:13px;color:#333;font-weight:normal;letter-spacing:0.4px">localhost (utf8)</div>
<div class="t" style="left:451px;top:979px;font-size:13px;color:#333;font-weight:normal;">NIKOLAY (MAIN)</div>
<div class="t" style="left:631px;top:979px;font-size:13px;color:#333;font-weight:normal;letter-spacing:0.3px">22.08.2024</div>
<div class="t" style="left:762px;top:979px;font-size:13px;color:#333;font-weight:normal;letter-spacing:0.3px">00:00:00:001</div>
<div class="t" style="left:889px;top:979px;font-size:13px;color:#333;font-weight:normal;letter-spacing:0.3px">11:00</div>
<svg style="left:0;top:0" width="1" height="1"><path d="M66.00 180.00 L66.00 190.00 L80.00 190.00 L80.00 180.00 Z" fill="#eef0fa" stroke="#7a88c0" stroke-width="1"/><rect x="76.0" y="172.5" width="2.5" height="5.0" fill="#b0b8d8" stroke="#7a88c0" stroke-width="0.6"/><path d="M63.00 181.00 L73.00 171.50 L83.00 181.00 L81.00 182.00 L73.00 174.50 L65.00 182.00 Z" fill="#70b040" stroke="#4a8a28" stroke-width="0.7"/><rect x="71.0" y="182.5" width="4.5" height="7.5" fill="#e88830" stroke="#b86020" stroke-width="0.6"/><rect x="365" y="176.5" width="6.3" height="6.5" fill="#8a8a8a"/><rect x="366.8" y="177" width="1.6" height="5.5" fill="#d8d8d8"/><rect x="363.8" y="182.5" width="8.8" height="1.6" fill="#8a8a8a"/><rect x="367.6" y="184" width="1.3" height="3" fill="#8a8a8a"/><path d="M175 218 L183 218 L179 222 Z M280 218 L288 218 L284 222 Z" fill="#555"/><path d="M320 224 L326 230" stroke="#e0a030" stroke-width="3.5" stroke-linecap="round"/><circle cx="315.5" cy="218.5" r="6.8" fill="url(#gBlueLens)" stroke="#3a6ac0" stroke-width="1.2"/><path d="M338 217.5 L346 217.5 L342 222 Z" fill="#444"/><circle cx="372.5" cy="219.5" r="9.5" fill="#f4f8ff" stroke="#3a6ac0" stroke-width="2"/><path d="M372.5 220 L377 214.5 M372.5 220 L369 222 M372.5 220 L375 225" stroke="#5080d0" stroke-width="1" /><path d="M372.5 220 L375 225" stroke="#f08060" stroke-width="0.8"/><circle cx="79" cy="288" r="8" fill="none" stroke="#444" stroke-width="1.4"/><path d="M75.8 284.8 L81.6 290.6 M81.9 286.4 L81.9 290.9 L77.4 290.9" fill="none" stroke="#444" stroke-width="1.7"/><path d="M88 287.5 H97 M113.5 298 V355 M113.5 321 H130 M113.5 355 H130" stroke="#b8b8b8" stroke-width="1" stroke-dasharray="1 1"/><path d="M102 282 Q102 281 103 281 H109 L111 283.5 H120 V286 H102 Z" fill="#6e6e6e"/><path d="M102 295 L105 286 H123 L120.5 295 Z" fill="#fbc060"/><path d="M139.00 320.00 L139.00 330.00 L153.00 330.00 L153.00 320.00 Z" fill="#eef0fa" stroke="#7a88c0" stroke-width="1"/><rect x="149.0" y="312.5" width="2.5" height="5.0" fill="#b0b8d8" stroke="#7a88c0" stroke-width="0.6"/><path d="M136.00 321.00 L146.00 311.50 L156.00 321.00 L154.00 322.00 L146.00 314.50 L138.00 322.00 Z" fill="#70b040" stroke="#4a8a28" stroke-width="0.7"/><rect x="144.0" y="322.5" width="4.5" height="7.5" fill="#e88830" stroke="#b86020" stroke-width="0.6"/><path d="M139.00 354.00 L139.00 364.00 L153.00 364.00 L153.00 354.00 Z" fill="#eef0fa" stroke="#7a88c0" stroke-width="1"/><rect x="149.0" y="346.5" width="2.5" height="5.0" fill="#b0b8d8" stroke="#7a88c0" stroke-width="0.6"/><path d="M136.00 355.00 L146.00 345.50 L156.00 355.00 L154.00 356.00 L146.00 348.50 L138.00 356.00 Z" fill="#70b040" stroke="#4a8a28" stroke-width="0.7"/><rect x="144.0" y="356.5" width="4.5" height="7.5" fill="#e88830" stroke="#b86020" stroke-width="0.6"/><path d="M30 173 Q30 171 32 171 H38 L40 173 H46 V176 H30 Z" fill="#6e6e6e"/><rect x="30" y="176" width="16" height="9" fill="#fbc060"/><path d="M29.450000000000003 382.05 C29.450000000000003 377.3 33.25 375.4 38 375.4 C42.75 375.4 46.55 377.3 46.55 382.05 Z" fill="url(#gUserBody)" stroke="#5a9030" stroke-width="0.5"/><ellipse cx="38" cy="370.175" rx="4.2749999999999995" ry="5.699999999999999" fill="url(#gFace)" stroke="#b07040" stroke-width="0.5"/><path d="M33.725 369.7 C33.25 364 36.1 363.525 38 363.525 C39.9 363.525 42.75 364 42.275 369.7 C40.85 366.85 35.15 366.85 33.725 369.7 Z" fill="#b87040"/><path d="M64.45 524.05 C64.45 519.3 68.25 517.4 73 517.4 C77.75 517.4 81.55 519.3 81.55 524.05 Z" fill="url(#gUserBody)" stroke="#5a9030" stroke-width="0.5"/><ellipse cx="73" cy="512.175" rx="4.2749999999999995" ry="5.699999999999999" fill="url(#gFace)" stroke="#b07040" stroke-width="0.5"/><path d="M68.725 511.7 C68.25 506 71.1 505.525 73 505.525 C74.9 505.525 77.75 506 77.275 511.7 C75.85 508.85 70.15 508.85 68.725 511.7 Z" fill="#b87040"/><rect x="327" y="511" width="10.5" height="8" fill="none" stroke="#fff" stroke-width="1.3"/><rect x="327" y="510.5" width="10.5" height="2" fill="#fff"/><rect x="365" y="510.5" width="6.3" height="6.5" fill="#fff"/><rect x="363.8" y="516.5" width="8.8" height="1.6" fill="#fff"/><rect x="367.6" y="518" width="1.3" height="3" fill="#fff"/><path d="M330 571 L336 577" stroke="#e0a030" stroke-width="3.5" stroke-linecap="round"/><circle cx="325.5" cy="565.5" r="6.8" fill="url(#gBlueLens)" stroke="#3a6ac0" stroke-width="1.2"/><path d="M361 563 V560 A5.2 5 0 0 1 371.4 560 V563" fill="none" stroke="#707070" stroke-width="2.2"/><rect x="358.5" y="563" width="16" height="13" rx="1.5" fill="#e0c060" stroke="#a88830" stroke-width="1"/><path d="M87.5 902 L85.5 896 V889.5 Q85.5 888 87 888 Q88.5 888 88.5 889.5 V886 Q88.5 884.5 90 884.5 Q91.5 884.5 91.5 886 V884.5 Q91.5 883 93 883 Q94.5 883 94.5 884.5 V886.5 Q94.5 885.5 96 885.5 Q97.5 885.5 97.5 887 V891.5 Q97.5 890.3 98.7 890.3 Q99.8 890.3 99.8 891.5 V896 L96.5 902 Z" fill="#f6e0e4" stroke="#9c8cd4" stroke-width="1.3"/><path d="M88.5 889.5 V894 M91.5 886 V894 M94.5 886.5 V894" stroke="#b8a8e0" stroke-width="0.8"/><circle cx="153.5" cy="892.5" r="10" fill="#4a86c2"/><circle cx="153.5" cy="887.8" r="1.6" fill="#fff"/><rect x="152.2" y="890.5" width="2.6" height="7.5" fill="#fff"/><path d="M207 901.5 L213 895.5" stroke="#606060" stroke-width="1.3"/><g transform="translate(217 890) rotate(45)"><rect x="-2.5" y="-6" width="5" height="8" fill="#48b848"/><rect x="-5" y="2" width="10" height="2.5" rx="1" fill="#38a038"/><rect x="-4" y="-8" width="8" height="2.5" rx="1" fill="#58c858"/></g><g transform="translate(274.5 893) rotate(-35)"><path d="M-8 7 Q-7 5 -6 3 Q-6 -6 0 -7.5 Q6 -6 6 3 Q7 5 8 7 Z" fill="url(#gGold)" stroke="#c08018" stroke-width="1.1"/><rect x="-9" y="6.5" width="18" height="2.2" rx="1" fill="#e8b030" stroke="#c08018" stroke-width="0.6"/><circle cx="0" cy="10.5" r="1.8" fill="#d09020"/></g><circle cx="38.5" cy="984.5" r="10" fill="#4a86c2"/><circle cx="38.5" cy="979.8" r="1.6" fill="#fff"/><rect x="37.2" y="982.5" width="2.6" height="7.5" fill="#fff"/><path d="M244 977 Q251.5 973.5 259 977 V992 Q251.5 995.5 244 992 Z" fill="url(#gGold2)" stroke="#c07a30" stroke-width="1"/><path d="M244 982 Q251.5 985 259 982 M244 987 Q251.5 990 259 987 M244 977 Q251.5 980.5 259 977" fill="none" stroke="#c07a30" stroke-width="1"/><path d="M412.9 993.1 C412.9 988.6 416.5 986.8 421 986.8 C425.5 986.8 429.1 988.6 429.1 993.1 Z" fill="url(#gUserBody)" stroke="#5a9030" stroke-width="0.5"/><ellipse cx="421" cy="981.85" rx="4.05" ry="5.4" fill="url(#gFace)" stroke="#b07040" stroke-width="0.5"/><path d="M416.95 981.4 C416.5 976 419.2 975.55 421 975.55 C422.8 975.55 425.5 976 425.05 981.4 C423.7 978.7 418.3 978.7 416.95 981.4 Z" fill="#b87040"/><rect x="591.5" y="976.5" width="18" height="18" fill="#fff" stroke="#6a7ab8" stroke-width="1"/><rect x="592" y="977" width="17" height="4" fill="#e05050"/><text x="600.5" y="992" font-family="Liberation Sans" font-size="10.5" font-weight="bold" fill="#2a3a88" text-anchor="middle">31</text><g fill="#777"><circle cx="1207" cy="982" r="1.1"/><circle cx="1207" cy="987" r="1.1"/><circle cx="1202" cy="987" r="1.1"/><circle cx="1207" cy="992" r="1.1"/><circle cx="1202" cy="992" r="1.1"/><circle cx="1197" cy="992" r="1.1"/></g><rect x="780" y="188" width="10" height="385" fill="#b8b8b8"/><rect x="1185" y="188" width="10" height="416" fill="#b8b8b8"/><rect x="421.5" y="869.5" width="301" height="9.5" fill="#b8b8b8"/><rect x="826.5" y="869.5" width="301" height="9.5" fill="#b8b8b8"/></svg>
</body></html>
